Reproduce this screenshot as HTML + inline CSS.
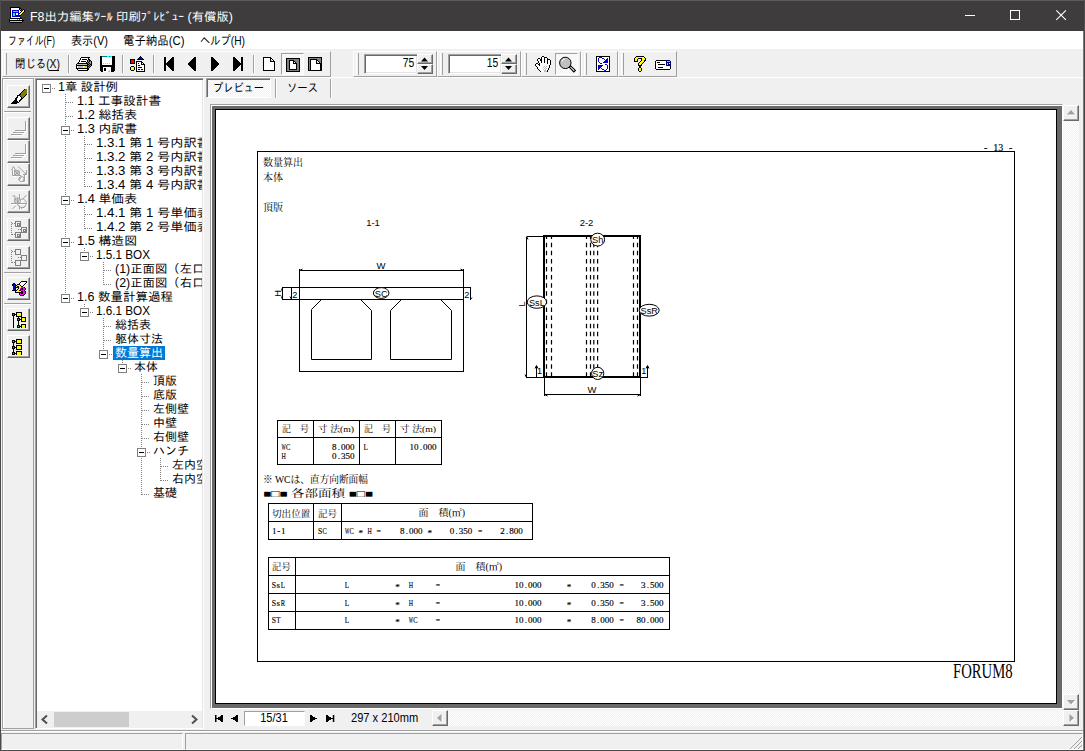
<!DOCTYPE html><html lang="ja"><head><meta charset="utf-8"><title>F8出力編集ツール 印刷プレビュー (有償版)</title><style>
*{box-sizing:border-box;margin:0;padding:0}
html,body{width:1085px;height:751px;overflow:hidden;background:#f0f0f0}
body{position:relative;font-family:"Liberation Sans",sans-serif;font-size:12px;color:#000}
.ab{position:absolute;display:block}
.jt{position:absolute;display:block;overflow:visible}
.jt text{font-family:"Liberation Sans","IPAGothic","Noto Sans CJK JP",sans-serif}
.jt text.dm{font-family:"Liberation Serif","Noto Serif CJK SC","Noto Sans CJK JP",serif}
#titlebar{left:0;top:0;width:1085px;height:31px;background:#3e3c3d}
#menubar{left:1px;top:31px;width:1083px;height:18px;background:#fff}
#toolbar{left:1px;top:49px;width:1083px;height:29px;background:#f0f0f0;border-bottom:1px solid #fff}
.band{position:absolute;top:51px;height:26px;border-top:1px solid #fff;border-left:1px solid #fff;border-right:1px solid #a0a0a0;border-bottom:1px solid #a0a0a0}
.grip{position:absolute;top:53px;width:3px;height:22px;border-left:1px solid #fff;border-right:1px solid #a0a0a0}
.sep{position:absolute;top:55px;width:2px;height:18px;border-left:1px solid #a0a0a0;border-right:1px solid #fff}
.edit{position:absolute;background:#fff;border:1px solid;border-color:#a0a0a0 #fff #fff #a0a0a0;box-shadow:inset 1px 1px 0 #696969, inset -1px -1px 0 #e3e3e3;text-align:right;font-size:12px;line-height:14px;padding:1px 3px 0 0;letter-spacing:0}
.spin{position:absolute;width:16px;height:10px;background:#f0f0f0;border:1px solid;border-color:#fff #696969 #696969 #fff;box-shadow:inset -1px -1px 0 #a0a0a0}
.tri{position:absolute;width:0;height:0}
.pressed{position:absolute;border:1px solid;border-color:#a0a0a0 #fff #fff #a0a0a0;background:#f8f8f8}
.sbtn{position:absolute;left:7px;width:23px;height:23px;background:#f0f0f0;border:1px solid;border-color:#fff #696969 #696969 #fff;box-shadow:inset -1px -1px 0 #a0a0a0}
.ssep{position:absolute;left:4px;width:27px;height:2px;border-top:1px solid #a0a0a0;border-bottom:1px solid #fff}
.dots-v{position:absolute;width:1px;background:repeating-linear-gradient(to bottom,#808080 0,#808080 1px,transparent 1px,transparent 2px)}
.dots-h{position:absolute;height:1px;background:repeating-linear-gradient(to right,#808080 0,#808080 1px,transparent 1px,transparent 2px)}
.exp{position:absolute;width:9px;height:9px;border:1px solid #808080;background:#fff}
.exp:after{content:"";position:absolute;left:1px;top:3px;width:5px;height:1px;background:#000}
.dither{background-color:#fff;background-image:linear-gradient(45deg,#f0f0f0 25%,transparent 25%,transparent 75%,#f0f0f0 75%),linear-gradient(45deg,#f0f0f0 25%,transparent 25%,transparent 75%,#f0f0f0 75%);background-size:2px 2px;background-position:0 0,1px 1px}
.scbtn{position:absolute;width:16px;height:16px;background:#f0f0f0;border:1px solid;border-color:#fff #696969 #696969 #fff;box-shadow:inset -1px -1px 0 #a0a0a0}
.doc{font-family:"Liberation Serif",serif;position:absolute;white-space:pre;color:#000}
</style></head><body><div id="titlebar" class="ab"><svg class="ab " style="left:9px;top:7px" width="16" height="16" viewBox="0 0 16 16" shape-rendering="crispEdges"><rect x="1" y="0" width="10" height="1" fill="#000"/><rect x="1" y="1" width="1" height="1" fill="#000"/><rect x="2" y="1" width="8" height="1" fill="#fff"/><rect x="10" y="1" width="2" height="1" fill="#000"/><rect x="1" y="2" width="1" height="1" fill="#000"/><rect x="2" y="2" width="8" height="1" fill="#fff"/><rect x="10" y="2" width="1" height="1" fill="#000"/><rect x="11" y="2" width="1" height="1" fill="#808080"/><rect x="12" y="2" width="1" height="1" fill="#000"/><rect x="14" y="2" width="1" height="1" fill="#000"/><rect x="1" y="3" width="1" height="1" fill="#000"/><rect x="2" y="3" width="1" height="1" fill="#fff"/><rect x="3" y="3" width="7" height="1" fill="#0000d0"/><rect x="10" y="3" width="1" height="1" fill="#fff"/><rect x="11" y="3" width="1" height="1" fill="#000"/><rect x="13" y="3" width="1" height="1" fill="#000"/><rect x="14" y="3" width="1" height="1" fill="#ffff00"/><rect x="15" y="3" width="1" height="1" fill="#000"/><rect x="1" y="4" width="1" height="1" fill="#000"/><rect x="2" y="4" width="1" height="1" fill="#fff"/><rect x="3" y="4" width="1" height="1" fill="#0000d0"/><rect x="4" y="4" width="5" height="1" fill="#00ffff"/><rect x="9" y="4" width="1" height="1" fill="#0000d0"/><rect x="10" y="4" width="2" height="1" fill="#fff"/><rect x="12" y="4" width="1" height="1" fill="#000"/><rect x="13" y="4" width="2" height="1" fill="#ffff00"/><rect x="15" y="4" width="1" height="1" fill="#000"/><rect x="1" y="5" width="1" height="1" fill="#000"/><rect x="2" y="5" width="1" height="1" fill="#fff"/><rect x="3" y="5" width="7" height="1" fill="#0000d0"/><rect x="10" y="5" width="1" height="1" fill="#fff"/><rect x="11" y="5" width="1" height="1" fill="#000"/><rect x="12" y="5" width="2" height="1" fill="#ffff00"/><rect x="14" y="5" width="1" height="1" fill="#000"/><rect x="1" y="6" width="1" height="1" fill="#000"/><rect x="2" y="6" width="1" height="1" fill="#fff"/><rect x="3" y="6" width="1" height="1" fill="#0000d0"/><rect x="4" y="6" width="2" height="1" fill="#00ffff"/><rect x="6" y="6" width="1" height="1" fill="#0000d0"/><rect x="7" y="6" width="2" height="1" fill="#fff"/><rect x="9" y="6" width="1" height="1" fill="#0000d0"/><rect x="10" y="6" width="1" height="1" fill="#000"/><rect x="11" y="6" width="2" height="1" fill="#ffff00"/><rect x="13" y="6" width="1" height="1" fill="#000"/><rect x="1" y="7" width="1" height="1" fill="#000"/><rect x="2" y="7" width="1" height="1" fill="#fff"/><rect x="3" y="7" width="1" height="1" fill="#0000d0"/><rect x="4" y="7" width="2" height="1" fill="#00ffff"/><rect x="6" y="7" width="1" height="1" fill="#0000d0"/><rect x="7" y="7" width="2" height="1" fill="#fff"/><rect x="9" y="7" width="1" height="1" fill="#0000d0"/><rect x="10" y="7" width="2" height="1" fill="#ffff00"/><rect x="12" y="7" width="1" height="1" fill="#000"/><rect x="1" y="8" width="1" height="1" fill="#000"/><rect x="2" y="8" width="1" height="1" fill="#fff"/><rect x="3" y="8" width="1" height="1" fill="#0000d0"/><rect x="4" y="8" width="2" height="1" fill="#00ffff"/><rect x="6" y="8" width="4" height="1" fill="#0000d0"/><rect x="10" y="8" width="2" height="1" fill="#000"/><rect x="1" y="9" width="1" height="1" fill="#000"/><rect x="2" y="9" width="1" height="1" fill="#fff"/><rect x="3" y="9" width="7" height="1" fill="#0000d0"/><rect x="10" y="9" width="1" height="1" fill="#000"/><rect x="1" y="10" width="1" height="1" fill="#000"/><rect x="2" y="10" width="9" height="1" fill="#fff"/><rect x="11" y="10" width="1" height="1" fill="#000"/><rect x="1" y="11" width="12" height="1" fill="#000"/><rect x="0" y="12" width="1" height="1" fill="#000"/><rect x="1" y="12" width="7" height="1" fill="#fff"/><rect x="8" y="12" width="1" height="1" fill="#00e000"/><rect x="9" y="12" width="1" height="1" fill="#fff"/><rect x="10" y="12" width="1" height="1" fill="#ff0000"/><rect x="11" y="12" width="2" height="1" fill="#fff"/><rect x="13" y="12" width="1" height="1" fill="#000"/><rect x="0" y="13" width="15" height="1" fill="#000"/><rect x="0" y="14" width="1" height="1" fill="#000"/><rect x="1" y="14" width="12" height="1" fill="#c0c0c0"/><rect x="13" y="14" width="1" height="1" fill="#000"/><rect x="1" y="15" width="12" height="1" fill="#000"/></svg><svg class="jt " role="img" aria-label="F8出力編集ツール 印刷プレビュー (有償版)" style="left:30px;top:8px;" width="210" height="16"><text x="0" y="12.6" font-size="12.1" fill="#fff" textLength="203" lengthAdjust="spacingAndGlyphs">F8出力編集ﾂｰﾙ 印刷ﾌﾟﾚﾋﾞｭｰ (有償版)</text></svg><svg class="ab" style="left:950px;top:0" width="135" height="31" fill="none" stroke="#fff" stroke-width="1"><path d="M15 15.500h10"/><rect x="60.500" y="10.500" width="9" height="9"/><path d="M106.300 10.300l9.600 9.600M115.900 10.300l-9.600 9.600" stroke-width="1.150"/></svg></div><div id="menubar" class="ab"></div><svg class="jt " role="img" aria-label="ファイル(F)" style="left:7.7px;top:33px;" width="49" height="16"><text x="0" y="12.3" font-size="12.4" fill="#000" textLength="47" lengthAdjust="spacingAndGlyphs">ファイル(F)</text></svg><svg class="jt " role="img" aria-label="表示(V)" style="left:70.8px;top:33px;" width="39" height="16"><text x="0" y="12.3" font-size="12.4" fill="#000" textLength="37" lengthAdjust="spacingAndGlyphs">表示(V)</text></svg><svg class="jt " role="img" aria-label="電子納品(C)" style="left:123.4px;top:33px;" width="63" height="16"><text x="0" y="12.3" font-size="12.4" fill="#000" textLength="61.500" lengthAdjust="spacingAndGlyphs">電子納品(C)</text></svg><svg class="jt " role="img" aria-label="ヘルプ(H)" style="left:200.4px;top:33px;" width="47" height="16"><text x="0" y="12.3" font-size="12.4" fill="#000" textLength="45" lengthAdjust="spacingAndGlyphs">ヘルプ(H)</text></svg><div id="toolbar" class="ab"></div><div class="band" style="left:2px;width:329px"></div><div class="band" style="left:353px;width:84px"></div><div class="band" style="left:437px;width:84px"></div><div class="band" style="left:521px;width:60px"></div><div class="band" style="left:581px;width:37px"></div><div class="band" style="left:618px;width:59px"></div><div class="grip" style="left:4px"></div><div class="grip" style="left:356px"></div><div class="grip" style="left:440px"></div><div class="grip" style="left:524px"></div><div class="grip" style="left:584px"></div><div class="grip" style="left:621px"></div><div class="sep" style="left:68px"></div><div class="sep" style="left:122px"></div><div class="sep" style="left:153px"></div><div class="sep" style="left:253px"></div><svg class="jt " role="img" aria-label="閉じる(X)" style="left:15.3px;top:57px;" width="47" height="16"><text x="0" y="11.3" font-size="12" fill="#000" textLength="45" lengthAdjust="spacingAndGlyphs">閉じる(X)</text></svg><div class="ab" style="left:49px;top:70px;width:10px;height:1px;background:#000"></div><svg class="ab " style="left:76px;top:57px" width="16" height="14" viewBox="0 0 16 14" shape-rendering="crispEdges"><rect x="5" y="0" width="9" height="1" fill="#000"/><rect x="4" y="1" width="1" height="1" fill="#000"/><rect x="5" y="1" width="7" height="1" fill="#fff"/><rect x="12" y="1" width="1" height="1" fill="#000"/><rect x="4" y="2" width="1" height="1" fill="#000"/><rect x="5" y="2" width="1" height="1" fill="#fff"/><rect x="6" y="2" width="5" height="1" fill="#000"/><rect x="11" y="2" width="1" height="1" fill="#fff"/><rect x="12" y="2" width="2" height="1" fill="#000"/><rect x="3" y="3" width="1" height="1" fill="#000"/><rect x="4" y="3" width="7" height="1" fill="#fff"/><rect x="11" y="3" width="1" height="1" fill="#000"/><rect x="12" y="3" width="1" height="1" fill="#808080"/><rect x="13" y="3" width="2" height="1" fill="#000"/><rect x="3" y="4" width="1" height="1" fill="#000"/><rect x="4" y="4" width="1" height="1" fill="#fff"/><rect x="5" y="4" width="5" height="1" fill="#000"/><rect x="10" y="4" width="1" height="1" fill="#fff"/><rect x="11" y="4" width="1" height="1" fill="#000"/><rect x="12" y="4" width="1" height="1" fill="#808080"/><rect x="13" y="4" width="1" height="1" fill="#000"/><rect x="14" y="4" width="1" height="1" fill="#808080"/><rect x="15" y="4" width="1" height="1" fill="#000"/><rect x="2" y="5" width="1" height="1" fill="#000"/><rect x="3" y="5" width="7" height="1" fill="#fff"/><rect x="10" y="5" width="1" height="1" fill="#000"/><rect x="11" y="5" width="1" height="1" fill="#808080"/><rect x="12" y="5" width="1" height="1" fill="#000"/><rect x="13" y="5" width="1" height="1" fill="#808080"/><rect x="14" y="5" width="1" height="1" fill="#c0c0c0"/><rect x="15" y="5" width="1" height="1" fill="#000"/><rect x="1" y="6" width="11" height="1" fill="#000"/><rect x="12" y="6" width="1" height="1" fill="#808080"/><rect x="13" y="6" width="1" height="1" fill="#000"/><rect x="14" y="6" width="1" height="1" fill="#808080"/><rect x="15" y="6" width="1" height="1" fill="#000"/><rect x="0" y="7" width="1" height="1" fill="#000"/><rect x="1" y="7" width="10" height="1" fill="#c0c0c0"/><rect x="11" y="7" width="2" height="1" fill="#000"/><rect x="13" y="7" width="1" height="1" fill="#808080"/><rect x="14" y="7" width="2" height="1" fill="#000"/><rect x="0" y="8" width="12" height="1" fill="#000"/><rect x="12" y="8" width="1" height="1" fill="#808080"/><rect x="13" y="8" width="1" height="1" fill="#000"/><rect x="14" y="8" width="1" height="1" fill="#808080"/><rect x="15" y="8" width="1" height="1" fill="#000"/><rect x="0" y="9" width="1" height="1" fill="#000"/><rect x="1" y="9" width="1" height="1" fill="#fff"/><rect x="2" y="9" width="5" height="1" fill="#c0c0c0"/><rect x="7" y="9" width="2" height="1" fill="#ffff00"/><rect x="9" y="9" width="2" height="1" fill="#c0c0c0"/><rect x="11" y="9" width="2" height="1" fill="#000"/><rect x="13" y="9" width="1" height="1" fill="#808080"/><rect x="14" y="9" width="1" height="1" fill="#000"/><rect x="0" y="10" width="1" height="1" fill="#000"/><rect x="1" y="10" width="1" height="1" fill="#fff"/><rect x="2" y="10" width="5" height="1" fill="#c0c0c0"/><rect x="7" y="10" width="2" height="1" fill="#ffff00"/><rect x="9" y="10" width="2" height="1" fill="#c0c0c0"/><rect x="11" y="10" width="1" height="1" fill="#000"/><rect x="12" y="10" width="1" height="1" fill="#808080"/><rect x="13" y="10" width="1" height="1" fill="#000"/><rect x="0" y="11" width="13" height="1" fill="#000"/><rect x="1" y="12" width="1" height="1" fill="#000"/><rect x="2" y="12" width="9" height="1" fill="#fff"/><rect x="11" y="12" width="2" height="1" fill="#000"/><rect x="2" y="13" width="10" height="1" fill="#000"/></svg><svg class="ab " style="left:100px;top:56px" width="15" height="16" viewBox="0 0 15 16" shape-rendering="crispEdges"><rect x="0" y="0" width="1" height="1" fill="#000"/><rect x="1" y="0" width="1" height="1" fill="#000080"/><rect x="2" y="0" width="5" height="1" fill="#008080"/><rect x="7" y="0" width="2" height="1" fill="#00ffff"/><rect x="9" y="0" width="1" height="1" fill="#008080"/><rect x="10" y="0" width="2" height="1" fill="#00ffff"/><rect x="12" y="0" width="3" height="1" fill="#000"/><rect x="0" y="1" width="2" height="1" fill="#000"/><rect x="2" y="1" width="10" height="1" fill="#fff"/><rect x="12" y="1" width="3" height="1" fill="#000"/><rect x="0" y="2" width="2" height="1" fill="#000"/><rect x="2" y="2" width="10" height="1" fill="#fff"/><rect x="12" y="2" width="3" height="1" fill="#000"/><rect x="0" y="3" width="2" height="1" fill="#000"/><rect x="2" y="3" width="10" height="1" fill="#fff"/><rect x="12" y="3" width="3" height="1" fill="#000"/><rect x="0" y="4" width="2" height="1" fill="#000"/><rect x="2" y="4" width="10" height="1" fill="#fff"/><rect x="12" y="4" width="3" height="1" fill="#000"/><rect x="0" y="5" width="2" height="1" fill="#000"/><rect x="2" y="5" width="10" height="1" fill="#fff"/><rect x="12" y="5" width="3" height="1" fill="#000"/><rect x="0" y="6" width="2" height="1" fill="#000"/><rect x="2" y="6" width="10" height="1" fill="#fff"/><rect x="12" y="6" width="3" height="1" fill="#000"/><rect x="0" y="7" width="2" height="1" fill="#000"/><rect x="2" y="7" width="1" height="1" fill="#fff"/><rect x="3" y="7" width="1" height="1" fill="#c0c0c0"/><rect x="4" y="7" width="1" height="1" fill="#fff"/><rect x="5" y="7" width="1" height="1" fill="#c0c0c0"/><rect x="6" y="7" width="1" height="1" fill="#fff"/><rect x="7" y="7" width="1" height="1" fill="#c0c0c0"/><rect x="8" y="7" width="1" height="1" fill="#fff"/><rect x="9" y="7" width="1" height="1" fill="#c0c0c0"/><rect x="10" y="7" width="2" height="1" fill="#fff"/><rect x="12" y="7" width="3" height="1" fill="#000"/><rect x="0" y="8" width="2" height="1" fill="#000"/><rect x="2" y="8" width="10" height="1" fill="#fff"/><rect x="12" y="8" width="3" height="1" fill="#000"/><rect x="0" y="9" width="15" height="1" fill="#000"/><rect x="0" y="10" width="15" height="1" fill="#000"/><rect x="0" y="11" width="3" height="1" fill="#000"/><rect x="3" y="11" width="8" height="1" fill="#fff"/><rect x="11" y="11" width="4" height="1" fill="#000"/><rect x="0" y="12" width="3" height="1" fill="#000"/><rect x="3" y="12" width="1" height="1" fill="#fff"/><rect x="4" y="12" width="2" height="1" fill="#000"/><rect x="6" y="12" width="5" height="1" fill="#fff"/><rect x="11" y="12" width="4" height="1" fill="#000"/><rect x="0" y="13" width="3" height="1" fill="#000"/><rect x="3" y="13" width="1" height="1" fill="#fff"/><rect x="4" y="13" width="2" height="1" fill="#000"/><rect x="6" y="13" width="5" height="1" fill="#fff"/><rect x="11" y="13" width="4" height="1" fill="#000"/><rect x="0" y="14" width="3" height="1" fill="#000"/><rect x="3" y="14" width="1" height="1" fill="#fff"/><rect x="4" y="14" width="2" height="1" fill="#000"/><rect x="6" y="14" width="3" height="1" fill="#fff"/><rect x="9" y="14" width="1" height="1" fill="#c0c0c0"/><rect x="10" y="14" width="1" height="1" fill="#fff"/><rect x="11" y="14" width="4" height="1" fill="#000"/><rect x="1" y="15" width="2" height="1" fill="#000"/><rect x="3" y="15" width="5" height="1" fill="#fff"/><rect x="8" y="15" width="2" height="1" fill="#c0c0c0"/><rect x="10" y="15" width="1" height="1" fill="#fff"/><rect x="11" y="15" width="3" height="1" fill="#000"/></svg><svg class="ab " style="left:130px;top:56px" width="15" height="16" viewBox="0 0 15 16" shape-rendering="crispEdges"><rect x="10" y="0" width="1" height="1" fill="#000"/><rect x="9" y="1" width="1" height="1" fill="#000"/><rect x="10" y="1" width="1" height="1" fill="#0000d0"/><rect x="11" y="1" width="1" height="1" fill="#000"/><rect x="8" y="2" width="1" height="1" fill="#000"/><rect x="9" y="2" width="3" height="1" fill="#0000d0"/><rect x="12" y="2" width="1" height="1" fill="#000"/><rect x="0" y="3" width="5" height="1" fill="#000"/><rect x="7" y="3" width="7" height="1" fill="#000"/><rect x="0" y="4" width="1" height="1" fill="#000"/><rect x="1" y="4" width="3" height="1" fill="#ff0000"/><rect x="4" y="4" width="1" height="1" fill="#000"/><rect x="0" y="5" width="1" height="1" fill="#000"/><rect x="1" y="5" width="3" height="1" fill="#ff0000"/><rect x="4" y="5" width="1" height="1" fill="#000"/><rect x="6" y="5" width="6" height="1" fill="#000"/><rect x="0" y="6" width="1" height="1" fill="#000"/><rect x="1" y="6" width="3" height="1" fill="#ff0000"/><rect x="4" y="6" width="1" height="1" fill="#000"/><rect x="6" y="6" width="1" height="1" fill="#000"/><rect x="7" y="6" width="4" height="1" fill="#fff"/><rect x="11" y="6" width="2" height="1" fill="#000"/><rect x="0" y="7" width="5" height="1" fill="#000"/><rect x="6" y="7" width="1" height="1" fill="#000"/><rect x="7" y="7" width="1" height="1" fill="#fff"/><rect x="8" y="7" width="1" height="1" fill="#000"/><rect x="9" y="7" width="2" height="1" fill="#fff"/><rect x="11" y="7" width="1" height="1" fill="#000"/><rect x="12" y="7" width="1" height="1" fill="#fff"/><rect x="13" y="7" width="1" height="1" fill="#000"/><rect x="6" y="8" width="1" height="1" fill="#000"/><rect x="7" y="8" width="4" height="1" fill="#fff"/><rect x="11" y="8" width="4" height="1" fill="#000"/><rect x="6" y="9" width="1" height="1" fill="#000"/><rect x="7" y="9" width="1" height="1" fill="#fff"/><rect x="8" y="9" width="2" height="1" fill="#000"/><rect x="10" y="9" width="4" height="1" fill="#fff"/><rect x="14" y="9" width="1" height="1" fill="#000"/><rect x="1" y="10" width="3" height="1" fill="#000"/><rect x="6" y="10" width="1" height="1" fill="#000"/><rect x="7" y="10" width="7" height="1" fill="#fff"/><rect x="14" y="10" width="1" height="1" fill="#000"/><rect x="0" y="11" width="1" height="1" fill="#000"/><rect x="1" y="11" width="3" height="1" fill="#ffff00"/><rect x="4" y="11" width="1" height="1" fill="#000"/><rect x="6" y="11" width="1" height="1" fill="#000"/><rect x="7" y="11" width="1" height="1" fill="#fff"/><rect x="8" y="11" width="4" height="1" fill="#000"/><rect x="12" y="11" width="2" height="1" fill="#fff"/><rect x="14" y="11" width="1" height="1" fill="#000"/><rect x="0" y="12" width="1" height="1" fill="#000"/><rect x="1" y="12" width="3" height="1" fill="#ffff00"/><rect x="4" y="12" width="1" height="1" fill="#000"/><rect x="6" y="12" width="1" height="1" fill="#000"/><rect x="7" y="12" width="7" height="1" fill="#fff"/><rect x="14" y="12" width="1" height="1" fill="#000"/><rect x="0" y="13" width="1" height="1" fill="#000"/><rect x="1" y="13" width="3" height="1" fill="#ffff00"/><rect x="4" y="13" width="1" height="1" fill="#000"/><rect x="6" y="13" width="1" height="1" fill="#000"/><rect x="7" y="13" width="1" height="1" fill="#fff"/><rect x="8" y="13" width="2" height="1" fill="#000"/><rect x="10" y="13" width="1" height="1" fill="#fff"/><rect x="11" y="13" width="2" height="1" fill="#000"/><rect x="13" y="13" width="1" height="1" fill="#fff"/><rect x="14" y="13" width="1" height="1" fill="#000"/><rect x="1" y="14" width="3" height="1" fill="#000"/><rect x="6" y="14" width="1" height="1" fill="#000"/><rect x="7" y="14" width="7" height="1" fill="#fff"/><rect x="14" y="14" width="1" height="1" fill="#000"/><rect x="6" y="15" width="9" height="1" fill="#000"/></svg><svg class="ab " style="left:164px;top:57px" width="10" height="14" viewBox="0 0 10 14" shape-rendering="crispEdges"><rect x="0" y="0" width="2" height="1" fill="#000"/><rect x="8" y="0" width="2" height="1" fill="#000"/><rect x="0" y="1" width="2" height="1" fill="#000"/><rect x="7" y="1" width="3" height="1" fill="#000"/><rect x="0" y="2" width="2" height="1" fill="#000"/><rect x="6" y="2" width="4" height="1" fill="#000"/><rect x="0" y="3" width="2" height="1" fill="#000"/><rect x="5" y="3" width="5" height="1" fill="#000"/><rect x="0" y="4" width="2" height="1" fill="#000"/><rect x="4" y="4" width="6" height="1" fill="#000"/><rect x="0" y="5" width="2" height="1" fill="#000"/><rect x="3" y="5" width="7" height="1" fill="#000"/><rect x="0" y="6" width="10" height="1" fill="#000"/><rect x="0" y="7" width="10" height="1" fill="#000"/><rect x="0" y="8" width="2" height="1" fill="#000"/><rect x="3" y="8" width="7" height="1" fill="#000"/><rect x="0" y="9" width="2" height="1" fill="#000"/><rect x="4" y="9" width="6" height="1" fill="#000"/><rect x="0" y="10" width="2" height="1" fill="#000"/><rect x="5" y="10" width="5" height="1" fill="#000"/><rect x="0" y="11" width="2" height="1" fill="#000"/><rect x="6" y="11" width="4" height="1" fill="#000"/><rect x="0" y="12" width="2" height="1" fill="#000"/><rect x="7" y="12" width="3" height="1" fill="#000"/><rect x="0" y="13" width="2" height="1" fill="#000"/><rect x="8" y="13" width="2" height="1" fill="#000"/></svg><svg class="ab " style="left:188px;top:57px" width="8" height="14" viewBox="0 0 8 14" shape-rendering="crispEdges"><rect x="6" y="0" width="2" height="1" fill="#000"/><rect x="5" y="1" width="3" height="1" fill="#000"/><rect x="4" y="2" width="4" height="1" fill="#000"/><rect x="3" y="3" width="5" height="1" fill="#000"/><rect x="2" y="4" width="6" height="1" fill="#000"/><rect x="1" y="5" width="7" height="1" fill="#000"/><rect x="0" y="6" width="8" height="1" fill="#000"/><rect x="0" y="7" width="8" height="1" fill="#000"/><rect x="1" y="8" width="7" height="1" fill="#000"/><rect x="2" y="9" width="6" height="1" fill="#000"/><rect x="3" y="10" width="5" height="1" fill="#000"/><rect x="4" y="11" width="4" height="1" fill="#000"/><rect x="5" y="12" width="3" height="1" fill="#000"/><rect x="6" y="13" width="2" height="1" fill="#000"/></svg><svg class="ab " style="left:211px;top:57px" width="8" height="14" viewBox="0 0 8 14" shape-rendering="crispEdges"><rect x="0" y="0" width="2" height="1" fill="#000"/><rect x="0" y="1" width="3" height="1" fill="#000"/><rect x="0" y="2" width="4" height="1" fill="#000"/><rect x="0" y="3" width="5" height="1" fill="#000"/><rect x="0" y="4" width="6" height="1" fill="#000"/><rect x="0" y="5" width="7" height="1" fill="#000"/><rect x="0" y="6" width="8" height="1" fill="#000"/><rect x="0" y="7" width="8" height="1" fill="#000"/><rect x="0" y="8" width="7" height="1" fill="#000"/><rect x="0" y="9" width="6" height="1" fill="#000"/><rect x="0" y="10" width="5" height="1" fill="#000"/><rect x="0" y="11" width="4" height="1" fill="#000"/><rect x="0" y="12" width="3" height="1" fill="#000"/><rect x="0" y="13" width="2" height="1" fill="#000"/></svg><svg class="ab " style="left:233px;top:57px" width="10" height="14" viewBox="0 0 10 14" shape-rendering="crispEdges"><rect x="0" y="0" width="2" height="1" fill="#000"/><rect x="8" y="0" width="2" height="1" fill="#000"/><rect x="0" y="1" width="3" height="1" fill="#000"/><rect x="8" y="1" width="2" height="1" fill="#000"/><rect x="0" y="2" width="4" height="1" fill="#000"/><rect x="8" y="2" width="2" height="1" fill="#000"/><rect x="0" y="3" width="5" height="1" fill="#000"/><rect x="8" y="3" width="2" height="1" fill="#000"/><rect x="0" y="4" width="6" height="1" fill="#000"/><rect x="8" y="4" width="2" height="1" fill="#000"/><rect x="0" y="5" width="7" height="1" fill="#000"/><rect x="8" y="5" width="2" height="1" fill="#000"/><rect x="0" y="6" width="10" height="1" fill="#000"/><rect x="0" y="7" width="10" height="1" fill="#000"/><rect x="0" y="8" width="7" height="1" fill="#000"/><rect x="8" y="8" width="2" height="1" fill="#000"/><rect x="0" y="9" width="6" height="1" fill="#000"/><rect x="8" y="9" width="2" height="1" fill="#000"/><rect x="0" y="10" width="5" height="1" fill="#000"/><rect x="8" y="10" width="2" height="1" fill="#000"/><rect x="0" y="11" width="4" height="1" fill="#000"/><rect x="8" y="11" width="2" height="1" fill="#000"/><rect x="0" y="12" width="3" height="1" fill="#000"/><rect x="8" y="12" width="2" height="1" fill="#000"/><rect x="0" y="13" width="2" height="1" fill="#000"/><rect x="8" y="13" width="2" height="1" fill="#000"/></svg><svg class="ab " style="left:263px;top:57px" width="12" height="14" viewBox="0 0 12 14" shape-rendering="crispEdges"><rect x="0" y="0" width="8" height="1" fill="#000"/><rect x="0" y="1" width="1" height="1" fill="#000"/><rect x="1" y="1" width="6" height="1" fill="#fff"/><rect x="7" y="1" width="2" height="1" fill="#000"/><rect x="0" y="2" width="1" height="1" fill="#000"/><rect x="1" y="2" width="6" height="1" fill="#fff"/><rect x="7" y="2" width="1" height="1" fill="#000"/><rect x="8" y="2" width="1" height="1" fill="#fff"/><rect x="9" y="2" width="1" height="1" fill="#000"/><rect x="0" y="3" width="1" height="1" fill="#000"/><rect x="1" y="3" width="6" height="1" fill="#fff"/><rect x="7" y="3" width="1" height="1" fill="#000"/><rect x="8" y="3" width="1" height="1" fill="#c0c0c0"/><rect x="9" y="3" width="1" height="1" fill="#fff"/><rect x="10" y="3" width="1" height="1" fill="#000"/><rect x="0" y="4" width="1" height="1" fill="#000"/><rect x="1" y="4" width="6" height="1" fill="#fff"/><rect x="7" y="4" width="5" height="1" fill="#000"/><rect x="0" y="5" width="1" height="1" fill="#000"/><rect x="1" y="5" width="10" height="1" fill="#fff"/><rect x="11" y="5" width="1" height="1" fill="#000"/><rect x="0" y="6" width="1" height="1" fill="#000"/><rect x="1" y="6" width="10" height="1" fill="#fff"/><rect x="11" y="6" width="1" height="1" fill="#000"/><rect x="0" y="7" width="1" height="1" fill="#000"/><rect x="1" y="7" width="10" height="1" fill="#fff"/><rect x="11" y="7" width="1" height="1" fill="#000"/><rect x="0" y="8" width="1" height="1" fill="#000"/><rect x="1" y="8" width="10" height="1" fill="#fff"/><rect x="11" y="8" width="1" height="1" fill="#000"/><rect x="0" y="9" width="1" height="1" fill="#000"/><rect x="1" y="9" width="10" height="1" fill="#fff"/><rect x="11" y="9" width="1" height="1" fill="#000"/><rect x="0" y="10" width="1" height="1" fill="#000"/><rect x="1" y="10" width="10" height="1" fill="#fff"/><rect x="11" y="10" width="1" height="1" fill="#000"/><rect x="0" y="11" width="1" height="1" fill="#000"/><rect x="1" y="11" width="10" height="1" fill="#fff"/><rect x="11" y="11" width="1" height="1" fill="#000"/><rect x="0" y="12" width="1" height="1" fill="#000"/><rect x="1" y="12" width="10" height="1" fill="#fff"/><rect x="11" y="12" width="1" height="1" fill="#000"/><rect x="0" y="13" width="12" height="1" fill="#000"/></svg><div class="pressed dither" style="left:281px;top:53px;width:23px;height:22px"></div><svg class="ab " style="left:286px;top:58px" width="14" height="14" viewBox="0 0 14 14" shape-rendering="crispEdges"><rect x="0" y="0" width="14" height="1" fill="#000"/><rect x="0" y="1" width="1" height="1" fill="#000"/><rect x="1" y="1" width="12" height="1" fill="#808080"/><rect x="13" y="1" width="1" height="1" fill="#000"/><rect x="0" y="2" width="1" height="1" fill="#000"/><rect x="1" y="2" width="2" height="1" fill="#808080"/><rect x="3" y="2" width="5" height="1" fill="#000"/><rect x="8" y="2" width="5" height="1" fill="#808080"/><rect x="13" y="2" width="1" height="1" fill="#000"/><rect x="0" y="3" width="1" height="1" fill="#000"/><rect x="1" y="3" width="2" height="1" fill="#808080"/><rect x="3" y="3" width="1" height="1" fill="#000"/><rect x="4" y="3" width="3" height="1" fill="#fff"/><rect x="7" y="3" width="2" height="1" fill="#000"/><rect x="9" y="3" width="4" height="1" fill="#808080"/><rect x="13" y="3" width="1" height="1" fill="#000"/><rect x="0" y="4" width="1" height="1" fill="#000"/><rect x="1" y="4" width="2" height="1" fill="#808080"/><rect x="3" y="4" width="1" height="1" fill="#000"/><rect x="4" y="4" width="3" height="1" fill="#fff"/><rect x="7" y="4" width="1" height="1" fill="#000"/><rect x="8" y="4" width="1" height="1" fill="#fff"/><rect x="9" y="4" width="1" height="1" fill="#000"/><rect x="10" y="4" width="3" height="1" fill="#808080"/><rect x="13" y="4" width="1" height="1" fill="#000"/><rect x="0" y="5" width="1" height="1" fill="#000"/><rect x="1" y="5" width="2" height="1" fill="#808080"/><rect x="3" y="5" width="1" height="1" fill="#000"/><rect x="4" y="5" width="3" height="1" fill="#fff"/><rect x="7" y="5" width="4" height="1" fill="#000"/><rect x="11" y="5" width="2" height="1" fill="#808080"/><rect x="13" y="5" width="1" height="1" fill="#000"/><rect x="0" y="6" width="1" height="1" fill="#000"/><rect x="1" y="6" width="2" height="1" fill="#808080"/><rect x="3" y="6" width="1" height="1" fill="#000"/><rect x="4" y="6" width="6" height="1" fill="#fff"/><rect x="10" y="6" width="1" height="1" fill="#000"/><rect x="11" y="6" width="2" height="1" fill="#808080"/><rect x="13" y="6" width="1" height="1" fill="#000"/><rect x="0" y="7" width="1" height="1" fill="#000"/><rect x="1" y="7" width="2" height="1" fill="#808080"/><rect x="3" y="7" width="1" height="1" fill="#000"/><rect x="4" y="7" width="6" height="1" fill="#fff"/><rect x="10" y="7" width="1" height="1" fill="#000"/><rect x="11" y="7" width="2" height="1" fill="#808080"/><rect x="13" y="7" width="1" height="1" fill="#000"/><rect x="0" y="8" width="1" height="1" fill="#000"/><rect x="1" y="8" width="2" height="1" fill="#808080"/><rect x="3" y="8" width="1" height="1" fill="#000"/><rect x="4" y="8" width="6" height="1" fill="#fff"/><rect x="10" y="8" width="1" height="1" fill="#000"/><rect x="11" y="8" width="2" height="1" fill="#808080"/><rect x="13" y="8" width="1" height="1" fill="#000"/><rect x="0" y="9" width="1" height="1" fill="#000"/><rect x="1" y="9" width="2" height="1" fill="#808080"/><rect x="3" y="9" width="1" height="1" fill="#000"/><rect x="4" y="9" width="6" height="1" fill="#fff"/><rect x="10" y="9" width="1" height="1" fill="#000"/><rect x="11" y="9" width="2" height="1" fill="#808080"/><rect x="13" y="9" width="1" height="1" fill="#000"/><rect x="0" y="10" width="1" height="1" fill="#000"/><rect x="1" y="10" width="2" height="1" fill="#808080"/><rect x="3" y="10" width="1" height="1" fill="#000"/><rect x="4" y="10" width="6" height="1" fill="#fff"/><rect x="10" y="10" width="1" height="1" fill="#000"/><rect x="11" y="10" width="2" height="1" fill="#808080"/><rect x="13" y="10" width="1" height="1" fill="#000"/><rect x="0" y="11" width="1" height="1" fill="#000"/><rect x="1" y="11" width="2" height="1" fill="#808080"/><rect x="3" y="11" width="8" height="1" fill="#000"/><rect x="11" y="11" width="2" height="1" fill="#808080"/><rect x="13" y="11" width="1" height="1" fill="#000"/><rect x="0" y="12" width="1" height="1" fill="#000"/><rect x="1" y="12" width="12" height="1" fill="#808080"/><rect x="13" y="12" width="1" height="1" fill="#000"/><rect x="0" y="13" width="14" height="1" fill="#000"/></svg><svg class="ab " style="left:308px;top:57px" width="14" height="14" viewBox="0 0 14 14" shape-rendering="crispEdges"><rect x="0" y="0" width="14" height="1" fill="#000"/><rect x="0" y="1" width="1" height="1" fill="#000"/><rect x="1" y="1" width="12" height="1" fill="#808080"/><rect x="13" y="1" width="1" height="1" fill="#000"/><rect x="0" y="2" width="1" height="1" fill="#000"/><rect x="1" y="2" width="1" height="1" fill="#808080"/><rect x="2" y="2" width="7" height="1" fill="#000"/><rect x="9" y="2" width="4" height="1" fill="#808080"/><rect x="13" y="2" width="1" height="1" fill="#000"/><rect x="0" y="3" width="1" height="1" fill="#000"/><rect x="1" y="3" width="1" height="1" fill="#808080"/><rect x="2" y="3" width="1" height="1" fill="#000"/><rect x="3" y="3" width="5" height="1" fill="#fff"/><rect x="8" y="3" width="2" height="1" fill="#000"/><rect x="10" y="3" width="3" height="1" fill="#808080"/><rect x="13" y="3" width="1" height="1" fill="#000"/><rect x="0" y="4" width="1" height="1" fill="#000"/><rect x="1" y="4" width="1" height="1" fill="#808080"/><rect x="2" y="4" width="1" height="1" fill="#000"/><rect x="3" y="4" width="5" height="1" fill="#fff"/><rect x="8" y="4" width="1" height="1" fill="#000"/><rect x="9" y="4" width="1" height="1" fill="#fff"/><rect x="10" y="4" width="1" height="1" fill="#000"/><rect x="11" y="4" width="2" height="1" fill="#808080"/><rect x="13" y="4" width="1" height="1" fill="#000"/><rect x="0" y="5" width="1" height="1" fill="#000"/><rect x="1" y="5" width="1" height="1" fill="#808080"/><rect x="2" y="5" width="1" height="1" fill="#000"/><rect x="3" y="5" width="5" height="1" fill="#fff"/><rect x="8" y="5" width="1" height="1" fill="#000"/><rect x="9" y="5" width="1" height="1" fill="#c0c0c0"/><rect x="10" y="5" width="1" height="1" fill="#fff"/><rect x="11" y="5" width="1" height="1" fill="#000"/><rect x="12" y="5" width="1" height="1" fill="#808080"/><rect x="13" y="5" width="1" height="1" fill="#000"/><rect x="0" y="6" width="1" height="1" fill="#000"/><rect x="1" y="6" width="1" height="1" fill="#808080"/><rect x="2" y="6" width="1" height="1" fill="#000"/><rect x="3" y="6" width="5" height="1" fill="#fff"/><rect x="8" y="6" width="6" height="1" fill="#000"/><rect x="0" y="7" width="1" height="1" fill="#000"/><rect x="1" y="7" width="1" height="1" fill="#808080"/><rect x="2" y="7" width="1" height="1" fill="#000"/><rect x="3" y="7" width="9" height="1" fill="#fff"/><rect x="12" y="7" width="2" height="1" fill="#000"/><rect x="0" y="8" width="1" height="1" fill="#000"/><rect x="1" y="8" width="1" height="1" fill="#808080"/><rect x="2" y="8" width="1" height="1" fill="#000"/><rect x="3" y="8" width="9" height="1" fill="#fff"/><rect x="12" y="8" width="2" height="1" fill="#000"/><rect x="0" y="9" width="1" height="1" fill="#000"/><rect x="1" y="9" width="1" height="1" fill="#808080"/><rect x="2" y="9" width="1" height="1" fill="#000"/><rect x="3" y="9" width="9" height="1" fill="#fff"/><rect x="12" y="9" width="2" height="1" fill="#000"/><rect x="0" y="10" width="1" height="1" fill="#000"/><rect x="1" y="10" width="1" height="1" fill="#808080"/><rect x="2" y="10" width="1" height="1" fill="#000"/><rect x="3" y="10" width="9" height="1" fill="#fff"/><rect x="12" y="10" width="2" height="1" fill="#000"/><rect x="0" y="11" width="1" height="1" fill="#000"/><rect x="1" y="11" width="1" height="1" fill="#808080"/><rect x="2" y="11" width="1" height="1" fill="#000"/><rect x="3" y="11" width="9" height="1" fill="#fff"/><rect x="12" y="11" width="2" height="1" fill="#000"/><rect x="0" y="12" width="1" height="1" fill="#000"/><rect x="1" y="12" width="1" height="1" fill="#808080"/><rect x="2" y="12" width="1" height="1" fill="#000"/><rect x="3" y="12" width="9" height="1" fill="#fff"/><rect x="12" y="12" width="2" height="1" fill="#000"/><rect x="0" y="13" width="14" height="1" fill="#000"/></svg><div class="edit" style="left:364px;top:54px;width:54px;height:20px"><span style="display:inline-block;transform:scaleX(.86);transform-origin:100% 50%">75</span></div><div class="spin" style="left:417px;top:54px"></div><div class="spin" style="left:417px;top:64px"></div><svg class="ab" style="left:417px;top:55px" width="16" height="18" fill="#000"><path d="M7.5 2.5l3.5 4h-7z"/><path d="M7.5 15l3.5-4h-7z"/></svg><div class="edit" style="left:448px;top:54px;width:54px;height:20px"><span style="display:inline-block;transform:scaleX(.86);transform-origin:100% 50%">15</span></div><div class="spin" style="left:501px;top:54px"></div><div class="spin" style="left:501px;top:64px"></div><svg class="ab" style="left:501px;top:55px" width="16" height="18" fill="#000"><path d="M7.5 2.5l3.5 4h-7z"/><path d="M7.5 15l3.5-4h-7z"/></svg><svg class="ab " style="left:535px;top:56px" width="16" height="16" viewBox="0 0 16 16" shape-rendering="crispEdges"><rect x="7" y="0" width="2" height="1" fill="#000"/><rect x="6" y="1" width="1" height="1" fill="#000"/><rect x="7" y="1" width="2" height="1" fill="#fff"/><rect x="9" y="1" width="3" height="1" fill="#000"/><rect x="3" y="2" width="2" height="1" fill="#000"/><rect x="6" y="2" width="1" height="1" fill="#000"/><rect x="7" y="2" width="2" height="1" fill="#fff"/><rect x="9" y="2" width="1" height="1" fill="#000"/><rect x="10" y="2" width="2" height="1" fill="#fff"/><rect x="12" y="2" width="1" height="1" fill="#000"/><rect x="2" y="3" width="1" height="1" fill="#000"/><rect x="3" y="3" width="2" height="1" fill="#fff"/><rect x="5" y="3" width="2" height="1" fill="#000"/><rect x="7" y="3" width="2" height="1" fill="#fff"/><rect x="9" y="3" width="1" height="1" fill="#000"/><rect x="10" y="3" width="2" height="1" fill="#fff"/><rect x="12" y="3" width="3" height="1" fill="#000"/><rect x="2" y="4" width="1" height="1" fill="#000"/><rect x="3" y="4" width="2" height="1" fill="#fff"/><rect x="5" y="4" width="2" height="1" fill="#000"/><rect x="7" y="4" width="2" height="1" fill="#fff"/><rect x="9" y="4" width="1" height="1" fill="#000"/><rect x="10" y="4" width="2" height="1" fill="#fff"/><rect x="12" y="4" width="1" height="1" fill="#000"/><rect x="13" y="4" width="2" height="1" fill="#fff"/><rect x="15" y="4" width="1" height="1" fill="#000"/><rect x="3" y="5" width="1" height="1" fill="#000"/><rect x="4" y="5" width="2" height="1" fill="#fff"/><rect x="6" y="5" width="1" height="1" fill="#000"/><rect x="7" y="5" width="2" height="1" fill="#fff"/><rect x="9" y="5" width="1" height="1" fill="#000"/><rect x="10" y="5" width="2" height="1" fill="#fff"/><rect x="12" y="5" width="1" height="1" fill="#000"/><rect x="13" y="5" width="2" height="1" fill="#fff"/><rect x="15" y="5" width="1" height="1" fill="#000"/><rect x="3" y="6" width="1" height="1" fill="#000"/><rect x="4" y="6" width="2" height="1" fill="#fff"/><rect x="6" y="6" width="1" height="1" fill="#000"/><rect x="7" y="6" width="2" height="1" fill="#fff"/><rect x="9" y="6" width="1" height="1" fill="#000"/><rect x="10" y="6" width="2" height="1" fill="#fff"/><rect x="12" y="6" width="1" height="1" fill="#000"/><rect x="13" y="6" width="2" height="1" fill="#fff"/><rect x="15" y="6" width="1" height="1" fill="#000"/><rect x="1" y="7" width="2" height="1" fill="#000"/><rect x="3" y="7" width="1" height="1" fill="#fff"/><rect x="4" y="7" width="1" height="1" fill="#000"/><rect x="5" y="7" width="7" height="1" fill="#fff"/><rect x="12" y="7" width="1" height="1" fill="#000"/><rect x="13" y="7" width="2" height="1" fill="#fff"/><rect x="15" y="7" width="1" height="1" fill="#000"/><rect x="0" y="8" width="1" height="1" fill="#000"/><rect x="1" y="8" width="2" height="1" fill="#fff"/><rect x="3" y="8" width="2" height="1" fill="#000"/><rect x="5" y="8" width="10" height="1" fill="#fff"/><rect x="15" y="8" width="1" height="1" fill="#000"/><rect x="0" y="9" width="1" height="1" fill="#000"/><rect x="1" y="9" width="3" height="1" fill="#fff"/><rect x="4" y="9" width="1" height="1" fill="#000"/><rect x="5" y="9" width="9" height="1" fill="#fff"/><rect x="14" y="9" width="1" height="1" fill="#000"/><rect x="1" y="10" width="1" height="1" fill="#000"/><rect x="2" y="10" width="7" height="1" fill="#fff"/><rect x="9" y="10" width="1" height="1" fill="#c0c0c0"/><rect x="10" y="10" width="1" height="1" fill="#fff"/><rect x="11" y="10" width="1" height="1" fill="#c0c0c0"/><rect x="12" y="10" width="2" height="1" fill="#fff"/><rect x="14" y="10" width="1" height="1" fill="#000"/><rect x="2" y="11" width="1" height="1" fill="#000"/><rect x="3" y="11" width="5" height="1" fill="#fff"/><rect x="8" y="11" width="1" height="1" fill="#c0c0c0"/><rect x="9" y="11" width="1" height="1" fill="#fff"/><rect x="10" y="11" width="1" height="1" fill="#c0c0c0"/><rect x="11" y="11" width="3" height="1" fill="#fff"/><rect x="14" y="11" width="1" height="1" fill="#000"/><rect x="2" y="12" width="1" height="1" fill="#000"/><rect x="3" y="12" width="6" height="1" fill="#fff"/><rect x="9" y="12" width="1" height="1" fill="#c0c0c0"/><rect x="10" y="12" width="1" height="1" fill="#fff"/><rect x="11" y="12" width="1" height="1" fill="#c0c0c0"/><rect x="12" y="12" width="1" height="1" fill="#fff"/><rect x="13" y="12" width="1" height="1" fill="#000"/><rect x="3" y="13" width="1" height="1" fill="#000"/><rect x="4" y="13" width="4" height="1" fill="#fff"/><rect x="8" y="13" width="1" height="1" fill="#c0c0c0"/><rect x="9" y="13" width="1" height="1" fill="#fff"/><rect x="10" y="13" width="1" height="1" fill="#c0c0c0"/><rect x="11" y="13" width="2" height="1" fill="#fff"/><rect x="13" y="13" width="1" height="1" fill="#000"/><rect x="4" y="14" width="1" height="1" fill="#000"/><rect x="5" y="14" width="4" height="1" fill="#fff"/><rect x="9" y="14" width="2" height="1" fill="#c0c0c0"/><rect x="11" y="14" width="1" height="1" fill="#fff"/><rect x="12" y="14" width="1" height="1" fill="#000"/><rect x="5" y="15" width="1" height="1" fill="#000"/><rect x="6" y="15" width="3" height="1" fill="#fff"/><rect x="9" y="15" width="3" height="1" fill="#c0c0c0"/><rect x="12" y="15" width="1" height="1" fill="#000"/></svg><div class="pressed dither" style="left:555px;top:53px;width:23px;height:22px"></div><svg class="ab" style="left:556px;top:54px" width="22" height="20"><path d="M13.2 13.2l4.6 4.8 1.6-1.6-4.8-4.6z" fill="#fff" stroke="#000" stroke-width="1.1"/><circle cx="9.300" cy="8.900" r="5.700" fill="#c0c0c0" stroke="#000" stroke-width="1"/><path d="M6 7.5a3.6 3.6 0 0 1 3-2.6" fill="none" stroke="#fff" stroke-width="1"/></svg><svg class="ab " style="left:596px;top:56px" width="14" height="16" viewBox="0 0 14 16" shape-rendering="crispEdges"><rect x="0" y="0" width="14" height="1" fill="#000"/><rect x="0" y="1" width="1" height="1" fill="#000"/><rect x="1" y="1" width="2" height="1" fill="#fff"/><rect x="3" y="1" width="3" height="1" fill="#0000d0"/><rect x="6" y="1" width="7" height="1" fill="#fff"/><rect x="13" y="1" width="1" height="1" fill="#000"/><rect x="0" y="2" width="1" height="1" fill="#000"/><rect x="1" y="2" width="1" height="1" fill="#fff"/><rect x="2" y="2" width="1" height="1" fill="#0000d0"/><rect x="3" y="2" width="3" height="1" fill="#fff"/><rect x="6" y="2" width="2" height="1" fill="#0000d0"/><rect x="8" y="2" width="3" height="1" fill="#fff"/><rect x="11" y="2" width="1" height="1" fill="#0000d0"/><rect x="12" y="2" width="1" height="1" fill="#fff"/><rect x="13" y="2" width="1" height="1" fill="#000"/><rect x="0" y="3" width="1" height="1" fill="#000"/><rect x="1" y="3" width="1" height="1" fill="#fff"/><rect x="2" y="3" width="1" height="1" fill="#0000d0"/><rect x="3" y="3" width="5" height="1" fill="#fff"/><rect x="8" y="3" width="1" height="1" fill="#0000d0"/><rect x="9" y="3" width="1" height="1" fill="#fff"/><rect x="10" y="3" width="2" height="1" fill="#0000d0"/><rect x="12" y="3" width="1" height="1" fill="#fff"/><rect x="13" y="3" width="1" height="1" fill="#000"/><rect x="0" y="4" width="1" height="1" fill="#000"/><rect x="1" y="4" width="1" height="1" fill="#fff"/><rect x="2" y="4" width="1" height="1" fill="#0000d0"/><rect x="3" y="4" width="6" height="1" fill="#fff"/><rect x="9" y="4" width="3" height="1" fill="#0000d0"/><rect x="12" y="4" width="1" height="1" fill="#fff"/><rect x="13" y="4" width="1" height="1" fill="#000"/><rect x="0" y="5" width="1" height="1" fill="#000"/><rect x="1" y="5" width="1" height="1" fill="#fff"/><rect x="2" y="5" width="1" height="1" fill="#0000d0"/><rect x="3" y="5" width="5" height="1" fill="#fff"/><rect x="8" y="5" width="4" height="1" fill="#0000d0"/><rect x="12" y="5" width="1" height="1" fill="#fff"/><rect x="13" y="5" width="1" height="1" fill="#000"/><rect x="0" y="6" width="1" height="1" fill="#000"/><rect x="1" y="6" width="2" height="1" fill="#fff"/><rect x="3" y="6" width="1" height="1" fill="#0000d0"/><rect x="4" y="6" width="3" height="1" fill="#fff"/><rect x="7" y="6" width="5" height="1" fill="#0000d0"/><rect x="12" y="6" width="1" height="1" fill="#fff"/><rect x="13" y="6" width="1" height="1" fill="#000"/><rect x="0" y="7" width="1" height="1" fill="#000"/><rect x="1" y="7" width="3" height="1" fill="#fff"/><rect x="4" y="7" width="2" height="1" fill="#0000d0"/><rect x="6" y="7" width="7" height="1" fill="#fff"/><rect x="13" y="7" width="1" height="1" fill="#000"/><rect x="0" y="8" width="1" height="1" fill="#000"/><rect x="1" y="8" width="8" height="1" fill="#fff"/><rect x="9" y="8" width="2" height="1" fill="#0000d0"/><rect x="11" y="8" width="2" height="1" fill="#fff"/><rect x="13" y="8" width="1" height="1" fill="#000"/><rect x="0" y="9" width="1" height="1" fill="#000"/><rect x="1" y="9" width="1" height="1" fill="#fff"/><rect x="2" y="9" width="5" height="1" fill="#0000d0"/><rect x="7" y="9" width="4" height="1" fill="#fff"/><rect x="11" y="9" width="1" height="1" fill="#0000d0"/><rect x="12" y="9" width="1" height="1" fill="#fff"/><rect x="13" y="9" width="1" height="1" fill="#000"/><rect x="0" y="10" width="1" height="1" fill="#000"/><rect x="1" y="10" width="1" height="1" fill="#fff"/><rect x="2" y="10" width="4" height="1" fill="#0000d0"/><rect x="6" y="10" width="5" height="1" fill="#fff"/><rect x="11" y="10" width="1" height="1" fill="#0000d0"/><rect x="12" y="10" width="1" height="1" fill="#fff"/><rect x="13" y="10" width="1" height="1" fill="#000"/><rect x="0" y="11" width="1" height="1" fill="#000"/><rect x="1" y="11" width="1" height="1" fill="#fff"/><rect x="2" y="11" width="3" height="1" fill="#0000d0"/><rect x="5" y="11" width="6" height="1" fill="#fff"/><rect x="11" y="11" width="1" height="1" fill="#0000d0"/><rect x="12" y="11" width="1" height="1" fill="#fff"/><rect x="13" y="11" width="1" height="1" fill="#000"/><rect x="0" y="12" width="1" height="1" fill="#000"/><rect x="1" y="12" width="1" height="1" fill="#fff"/><rect x="2" y="12" width="2" height="1" fill="#0000d0"/><rect x="4" y="12" width="1" height="1" fill="#fff"/><rect x="5" y="12" width="1" height="1" fill="#0000d0"/><rect x="6" y="12" width="5" height="1" fill="#fff"/><rect x="11" y="12" width="1" height="1" fill="#0000d0"/><rect x="12" y="12" width="1" height="1" fill="#fff"/><rect x="13" y="12" width="1" height="1" fill="#000"/><rect x="0" y="13" width="1" height="1" fill="#000"/><rect x="1" y="13" width="1" height="1" fill="#fff"/><rect x="2" y="13" width="1" height="1" fill="#0000d0"/><rect x="3" y="13" width="3" height="1" fill="#fff"/><rect x="6" y="13" width="2" height="1" fill="#0000d0"/><rect x="8" y="13" width="2" height="1" fill="#fff"/><rect x="10" y="13" width="1" height="1" fill="#0000d0"/><rect x="11" y="13" width="2" height="1" fill="#fff"/><rect x="13" y="13" width="1" height="1" fill="#000"/><rect x="0" y="14" width="1" height="1" fill="#000"/><rect x="1" y="14" width="7" height="1" fill="#fff"/><rect x="8" y="14" width="2" height="1" fill="#0000d0"/><rect x="10" y="14" width="3" height="1" fill="#fff"/><rect x="13" y="14" width="1" height="1" fill="#000"/><rect x="0" y="15" width="14" height="1" fill="#000"/></svg><svg class="ab " style="left:634px;top:56px" width="12" height="16" viewBox="0 0 12 16" shape-rendering="crispEdges"><rect x="2" y="0" width="8" height="1" fill="#000"/><rect x="1" y="1" width="1" height="1" fill="#000"/><rect x="2" y="1" width="8" height="1" fill="#ffff00"/><rect x="10" y="1" width="1" height="1" fill="#000"/><rect x="0" y="2" width="1" height="1" fill="#000"/><rect x="1" y="2" width="3" height="1" fill="#ffff00"/><rect x="4" y="2" width="4" height="1" fill="#000"/><rect x="8" y="2" width="3" height="1" fill="#ffff00"/><rect x="11" y="2" width="1" height="1" fill="#000"/><rect x="0" y="3" width="1" height="1" fill="#000"/><rect x="1" y="3" width="2" height="1" fill="#ffff00"/><rect x="3" y="3" width="1" height="1" fill="#000"/><rect x="7" y="3" width="1" height="1" fill="#000"/><rect x="8" y="3" width="3" height="1" fill="#ffff00"/><rect x="11" y="3" width="1" height="1" fill="#000"/><rect x="0" y="4" width="1" height="1" fill="#000"/><rect x="1" y="4" width="2" height="1" fill="#ffff00"/><rect x="3" y="4" width="1" height="1" fill="#000"/><rect x="7" y="4" width="1" height="1" fill="#000"/><rect x="8" y="4" width="2" height="1" fill="#ffff00"/><rect x="10" y="4" width="2" height="1" fill="#000"/><rect x="0" y="5" width="4" height="1" fill="#000"/><rect x="6" y="5" width="1" height="1" fill="#000"/><rect x="7" y="5" width="3" height="1" fill="#ffff00"/><rect x="10" y="5" width="1" height="1" fill="#000"/><rect x="5" y="6" width="1" height="1" fill="#000"/><rect x="6" y="6" width="3" height="1" fill="#ffff00"/><rect x="9" y="6" width="1" height="1" fill="#000"/><rect x="4" y="7" width="1" height="1" fill="#000"/><rect x="5" y="7" width="3" height="1" fill="#ffff00"/><rect x="8" y="7" width="1" height="1" fill="#000"/><rect x="4" y="8" width="1" height="1" fill="#000"/><rect x="5" y="8" width="2" height="1" fill="#ffff00"/><rect x="7" y="8" width="1" height="1" fill="#000"/><rect x="4" y="9" width="4" height="1" fill="#000"/><rect x="5" y="10" width="2" height="1" fill="#000"/><rect x="5" y="11" width="2" height="1" fill="#000"/><rect x="4" y="12" width="1" height="1" fill="#000"/><rect x="5" y="12" width="2" height="1" fill="#ffff00"/><rect x="7" y="12" width="1" height="1" fill="#000"/><rect x="4" y="13" width="1" height="1" fill="#000"/><rect x="5" y="13" width="2" height="1" fill="#ffff00"/><rect x="7" y="13" width="1" height="1" fill="#000"/><rect x="4" y="14" width="1" height="1" fill="#000"/><rect x="5" y="14" width="2" height="1" fill="#ffff00"/><rect x="7" y="14" width="1" height="1" fill="#000"/><rect x="5" y="15" width="2" height="1" fill="#000"/></svg><svg class="ab " style="left:655px;top:60px" width="16" height="10" viewBox="0 0 16 10" shape-rendering="crispEdges"><rect x="1" y="0" width="10" height="1" fill="#000"/><rect x="11" y="0" width="4" height="1" fill="#000080"/><rect x="0" y="1" width="1" height="1" fill="#000"/><rect x="1" y="1" width="10" height="1" fill="#fff"/><rect x="11" y="1" width="1" height="1" fill="#000080"/><rect x="12" y="1" width="3" height="1" fill="#00ffff"/><rect x="15" y="1" width="1" height="1" fill="#000080"/><rect x="0" y="2" width="1" height="1" fill="#000"/><rect x="1" y="2" width="1" height="1" fill="#fff"/><rect x="2" y="2" width="3" height="1" fill="#000"/><rect x="5" y="2" width="6" height="1" fill="#fff"/><rect x="11" y="2" width="5" height="1" fill="#000080"/><rect x="0" y="3" width="1" height="1" fill="#000"/><rect x="1" y="3" width="10" height="1" fill="#fff"/><rect x="11" y="3" width="1" height="1" fill="#000080"/><rect x="12" y="3" width="1" height="1" fill="#00ffff"/><rect x="13" y="3" width="1" height="1" fill="#000080"/><rect x="14" y="3" width="1" height="1" fill="#fff"/><rect x="15" y="3" width="1" height="1" fill="#000080"/><rect x="0" y="4" width="1" height="1" fill="#000"/><rect x="1" y="4" width="2" height="1" fill="#fff"/><rect x="3" y="4" width="7" height="1" fill="#000"/><rect x="10" y="4" width="1" height="1" fill="#fff"/><rect x="11" y="4" width="1" height="1" fill="#000080"/><rect x="12" y="4" width="1" height="1" fill="#00ffff"/><rect x="13" y="4" width="3" height="1" fill="#000080"/><rect x="0" y="5" width="1" height="1" fill="#000"/><rect x="1" y="5" width="10" height="1" fill="#fff"/><rect x="11" y="5" width="5" height="1" fill="#000080"/><rect x="0" y="6" width="1" height="1" fill="#000"/><rect x="1" y="6" width="14" height="1" fill="#fff"/><rect x="15" y="6" width="1" height="1" fill="#000"/><rect x="0" y="7" width="1" height="1" fill="#000"/><rect x="1" y="7" width="2" height="1" fill="#fff"/><rect x="3" y="7" width="5" height="1" fill="#000"/><rect x="8" y="7" width="7" height="1" fill="#fff"/><rect x="15" y="7" width="1" height="1" fill="#000"/><rect x="0" y="8" width="1" height="1" fill="#000"/><rect x="1" y="8" width="14" height="1" fill="#fff"/><rect x="15" y="8" width="1" height="1" fill="#000"/><rect x="1" y="9" width="14" height="1" fill="#000"/></svg><div class="ab" style="left:2px;top:78px;width:32px;height:651px;border:1px solid #a0a0a0;box-shadow:inset 1px 1px 0 #fff"></div><div class="sbtn" style="top:85px"></div><div class="sbtn" style="top:117px"></div><div class="sbtn" style="top:140px"></div><div class="sbtn" style="top:163px"></div><div class="sbtn" style="top:190px"></div><div class="sbtn" style="top:218px"></div><div class="sbtn" style="top:246px"></div><div class="sbtn" style="top:277px"></div><div class="sbtn" style="top:308px"></div><div class="sbtn" style="top:335px"></div><div class="ssep" style="top:111px"></div><div class="ssep" style="top:272px"></div><div class="ssep" style="top:303px"></div><svg class="ab " style="left:11px;top:89px" width="16" height="15" viewBox="0 0 16 15" shape-rendering="crispEdges"><rect x="13" y="0" width="1" height="1" fill="#000"/><rect x="14" y="0" width="2" height="1" fill="#808000"/><rect x="12" y="1" width="1" height="1" fill="#000"/><rect x="13" y="1" width="3" height="1" fill="#808000"/><rect x="11" y="2" width="1" height="1" fill="#000"/><rect x="12" y="2" width="4" height="1" fill="#808000"/><rect x="10" y="3" width="1" height="1" fill="#000"/><rect x="11" y="3" width="5" height="1" fill="#808000"/><rect x="9" y="4" width="1" height="1" fill="#000"/><rect x="10" y="4" width="6" height="1" fill="#808000"/><rect x="8" y="5" width="2" height="1" fill="#000"/><rect x="10" y="5" width="5" height="1" fill="#808000"/><rect x="15" y="5" width="1" height="1" fill="#000"/><rect x="6" y="6" width="3" height="1" fill="#000"/><rect x="9" y="6" width="5" height="1" fill="#808000"/><rect x="14" y="6" width="1" height="1" fill="#000"/><rect x="6" y="7" width="1" height="1" fill="#000"/><rect x="7" y="7" width="2" height="1" fill="#fff"/><rect x="9" y="7" width="1" height="1" fill="#000"/><rect x="10" y="7" width="3" height="1" fill="#808000"/><rect x="13" y="7" width="1" height="1" fill="#000"/><rect x="5" y="8" width="2" height="1" fill="#000"/><rect x="7" y="8" width="3" height="1" fill="#fff"/><rect x="10" y="8" width="1" height="1" fill="#000"/><rect x="11" y="8" width="1" height="1" fill="#808000"/><rect x="12" y="8" width="1" height="1" fill="#000"/><rect x="4" y="9" width="2" height="1" fill="#000"/><rect x="6" y="9" width="4" height="1" fill="#fff"/><rect x="10" y="9" width="2" height="1" fill="#000"/><rect x="4" y="10" width="2" height="1" fill="#000"/><rect x="6" y="10" width="3" height="1" fill="#fff"/><rect x="9" y="10" width="2" height="1" fill="#000"/><rect x="3" y="11" width="3" height="1" fill="#000"/><rect x="6" y="11" width="2" height="1" fill="#fff"/><rect x="8" y="11" width="2" height="1" fill="#000"/><rect x="2" y="12" width="5" height="1" fill="#000"/><rect x="7" y="12" width="1" height="1" fill="#fff"/><rect x="8" y="12" width="1" height="1" fill="#000"/><rect x="1" y="13" width="7" height="1" fill="#000"/><rect x="0" y="14" width="6" height="1" fill="#000"/></svg><svg class="ab" style="left:7px;top:117px" width="23" height="22" shape-rendering="crispEdges" fill="none"><path d="M18.5 4v9.5H8M5.5 15.5h11M3.5 17.5h11.5" stroke="#a0a0a0"/><path d="M19.5 4v10.5H9M6.5 16.5h11M4.5 18.5h11.5" stroke="#fff"/></svg><svg class="ab" style="left:7px;top:140px" width="23" height="22" shape-rendering="crispEdges" fill="none"><path d="M18.5 4v9.5H8M5.5 15.5h11M3.5 17.5h11.5" stroke="#a0a0a0"/><path d="M19.5 4v10.5H9M6.5 16.5h11M4.5 18.5h11.5" stroke="#fff"/></svg><svg class="ab" style="left:7px;top:163px" width="23" height="22" fill="none" stroke-width="1"><g stroke="#fff" transform="translate(1 1)"><path d="M4.500 7L6.500 3.500 8.500 7M5.500 7V12.500H14M7.500 7V9M11 3.500L19.500 11.500M19.500 7V11.500H16M17.500 11.500V18.500H14.500M12 14l2 2M11.500 17l3-3M8 8l4 4M8 12l4-4M8 10h4.500M10 7.500v5"/><circle cx="10" cy="10" r="2.800"/><circle cx="14.500" cy="16" r="2.600"/></g><g stroke="#a0a0a0"><path d="M4.500 7L6.500 3.500 8.500 7M5.500 7V12.500H14M7.500 7V9M11 3.500L19.500 11.500M19.500 7V11.500H16M17.500 11.500V18.500H14.500M12 14l2 2M11.500 17l3-3M8 8l4 4M8 12l4-4M8 10h4.500M10 7.500v5"/><circle cx="10" cy="10" r="2.800"/><circle cx="14.500" cy="16" r="2.600"/></g></svg><svg class="ab" style="left:7px;top:190px" width="23" height="22" fill="none" stroke-width="1"><g stroke="#fff" transform="translate(1 1)"><path d="M12.500 4V9M19.500 5L16 9M5.500 6H8V12M4 13.500H19.500M5.500 19L9 15.500M12.500 15.500V19.500M14 18.500L18.500 16.500M8.500 9l4 4M8.500 13l4-4M10.500 8v5"/><circle cx="10.500" cy="10.800" r="3"/><circle cx="15" cy="13.300" r="4.300"/></g><g stroke="#a0a0a0"><path d="M12.500 4V9M19.500 5L16 9M5.500 6H8V12M4 13.500H19.500M5.500 19L9 15.500M12.500 15.500V19.500M14 18.500L18.500 16.500M8.500 9l4 4M8.500 13l4-4M10.500 8v5"/><circle cx="10.500" cy="10.800" r="3"/><circle cx="15" cy="13.300" r="4.300"/></g></svg><svg class="ab" style="left:7px;top:218px" width="23" height="22" shape-rendering="crispEdges" fill="none" stroke="#808080"><path d="M4.500 4v14" stroke-dasharray="1 1"/><path d="M5 5.500h3M5 16.500h3M11 11.500h3" stroke-dasharray="1 1"/><rect x="8.500" y="3.500" width="5" height="5"/><rect x="10.500" y="5.500" width="2" height="2"/><rect x="8.500" y="14.500" width="5" height="5"/><rect x="10.500" y="16.500" width="2" height="2"/><rect x="14.500" y="9.500" width="5" height="5"/><rect x="16.500" y="11.500" width="2" height="2"/></svg><svg class="ab" style="left:7px;top:246px" width="23" height="22" shape-rendering="crispEdges" fill="none" stroke="#808080"><path d="M4.500 4v14" stroke-dasharray="1 1"/><path d="M5 5.500h3M5 16.500h3M11 11.500h3" stroke-dasharray="1 1"/><rect x="8.500" y="3.500" width="5" height="5"/><rect x="8.500" y="14.500" width="5" height="5"/><rect x="14.500" y="9.500" width="5" height="5"/></svg><svg class="ab " style="left:12px;top:281px" width="15" height="15" viewBox="0 0 15 15" shape-rendering="crispEdges"><rect x="9" y="0" width="6" height="1" fill="#000"/><rect x="8" y="1" width="1" height="1" fill="#000"/><rect x="9" y="1" width="5" height="1" fill="#fff"/><rect x="14" y="1" width="1" height="1" fill="#000"/><rect x="1" y="2" width="2" height="1" fill="#000"/><rect x="7" y="2" width="1" height="1" fill="#000"/><rect x="8" y="2" width="5" height="1" fill="#fff"/><rect x="13" y="2" width="1" height="1" fill="#000"/><rect x="0" y="3" width="1" height="1" fill="#000"/><rect x="1" y="3" width="2" height="1" fill="#0000d0"/><rect x="3" y="3" width="1" height="1" fill="#000"/><rect x="5" y="3" width="3" height="1" fill="#000"/><rect x="8" y="3" width="4" height="1" fill="#fff"/><rect x="12" y="3" width="1" height="1" fill="#000"/><rect x="0" y="4" width="1" height="1" fill="#000"/><rect x="1" y="4" width="2" height="1" fill="#0000d0"/><rect x="3" y="4" width="2" height="1" fill="#000"/><rect x="5" y="4" width="3" height="1" fill="#ffff00"/><rect x="8" y="4" width="1" height="1" fill="#000"/><rect x="9" y="4" width="2" height="1" fill="#fff"/><rect x="11" y="4" width="1" height="1" fill="#000"/><rect x="1" y="5" width="2" height="1" fill="#0000d0"/><rect x="3" y="5" width="1" height="1" fill="#000"/><rect x="4" y="5" width="1" height="1" fill="#ffff00"/><rect x="5" y="5" width="2" height="1" fill="#000"/><rect x="7" y="5" width="2" height="1" fill="#ffff00"/><rect x="9" y="5" width="2" height="1" fill="#000"/><rect x="1" y="6" width="2" height="1" fill="#0000d0"/><rect x="3" y="6" width="4" height="1" fill="#000"/><rect x="7" y="6" width="2" height="1" fill="#ffff00"/><rect x="9" y="6" width="3" height="1" fill="#ff00ff"/><rect x="12" y="6" width="1" height="1" fill="#000"/><rect x="1" y="7" width="2" height="1" fill="#0000d0"/><rect x="3" y="7" width="1" height="1" fill="#000"/><rect x="6" y="7" width="1" height="1" fill="#000"/><rect x="7" y="7" width="1" height="1" fill="#ffff00"/><rect x="8" y="7" width="1" height="1" fill="#ff00ff"/><rect x="9" y="7" width="2" height="1" fill="#000"/><rect x="11" y="7" width="2" height="1" fill="#ff00ff"/><rect x="13" y="7" width="1" height="1" fill="#000"/><rect x="1" y="8" width="2" height="1" fill="#0000d0"/><rect x="3" y="8" width="1" height="1" fill="#000"/><rect x="5" y="8" width="1" height="1" fill="#000"/><rect x="6" y="8" width="2" height="1" fill="#ffff00"/><rect x="8" y="8" width="3" height="1" fill="#000"/><rect x="11" y="8" width="2" height="1" fill="#ff00ff"/><rect x="13" y="8" width="1" height="1" fill="#000"/><rect x="0" y="9" width="5" height="1" fill="#000"/><rect x="5" y="9" width="2" height="1" fill="#ffff00"/><rect x="7" y="9" width="2" height="1" fill="#000"/><rect x="9" y="9" width="3" height="1" fill="#ff00ff"/><rect x="12" y="9" width="1" height="1" fill="#000"/><rect x="3" y="10" width="1" height="1" fill="#000"/><rect x="4" y="10" width="5" height="1" fill="#ffff00"/><rect x="9" y="10" width="2" height="1" fill="#000"/><rect x="11" y="10" width="2" height="1" fill="#ff00ff"/><rect x="13" y="10" width="1" height="1" fill="#000"/><rect x="3" y="11" width="8" height="1" fill="#000"/><rect x="11" y="11" width="2" height="1" fill="#ff00ff"/><rect x="13" y="11" width="1" height="1" fill="#000"/><rect x="7" y="12" width="1" height="1" fill="#000"/><rect x="8" y="12" width="1" height="1" fill="#ff00ff"/><rect x="9" y="12" width="2" height="1" fill="#000"/><rect x="11" y="12" width="2" height="1" fill="#ff00ff"/><rect x="13" y="12" width="1" height="1" fill="#000"/><rect x="7" y="13" width="1" height="1" fill="#000"/><rect x="8" y="13" width="4" height="1" fill="#ff00ff"/><rect x="12" y="13" width="1" height="1" fill="#000"/><rect x="8" y="14" width="4" height="1" fill="#000"/></svg><svg class="ab " style="left:12px;top:312px" width="14" height="16" viewBox="0 0 14 16" shape-rendering="crispEdges"><rect x="4" y="0" width="6" height="1" fill="#000"/><rect x="0" y="1" width="3" height="1" fill="#000"/><rect x="4" y="1" width="1" height="1" fill="#000"/><rect x="5" y="1" width="4" height="1" fill="#ffff00"/><rect x="9" y="1" width="1" height="1" fill="#000"/><rect x="0" y="2" width="1" height="1" fill="#000"/><rect x="1" y="2" width="1" height="1" fill="#00e000"/><rect x="2" y="2" width="3" height="1" fill="#000"/><rect x="5" y="2" width="4" height="1" fill="#ffff00"/><rect x="9" y="2" width="1" height="1" fill="#000"/><rect x="0" y="3" width="3" height="1" fill="#000"/><rect x="4" y="3" width="1" height="1" fill="#000"/><rect x="5" y="3" width="4" height="1" fill="#ffff00"/><rect x="9" y="3" width="1" height="1" fill="#000"/><rect x="1" y="4" width="1" height="1" fill="#000"/><rect x="4" y="4" width="6" height="1" fill="#000"/><rect x="1" y="5" width="1" height="1" fill="#000"/><rect x="6" y="5" width="1" height="1" fill="#000"/><rect x="9" y="5" width="5" height="1" fill="#000"/><rect x="1" y="6" width="1" height="1" fill="#000"/><rect x="5" y="6" width="3" height="1" fill="#000"/><rect x="9" y="6" width="1" height="1" fill="#000"/><rect x="10" y="6" width="3" height="1" fill="#ffff00"/><rect x="13" y="6" width="1" height="1" fill="#000"/><rect x="1" y="7" width="1" height="1" fill="#000"/><rect x="5" y="7" width="1" height="1" fill="#000"/><rect x="6" y="7" width="1" height="1" fill="#00e000"/><rect x="7" y="7" width="3" height="1" fill="#000"/><rect x="10" y="7" width="3" height="1" fill="#ffff00"/><rect x="13" y="7" width="1" height="1" fill="#000"/><rect x="1" y="8" width="1" height="1" fill="#000"/><rect x="5" y="8" width="3" height="1" fill="#000"/><rect x="9" y="8" width="1" height="1" fill="#000"/><rect x="10" y="8" width="3" height="1" fill="#ffff00"/><rect x="13" y="8" width="1" height="1" fill="#000"/><rect x="1" y="9" width="1" height="1" fill="#000"/><rect x="6" y="9" width="1" height="1" fill="#000"/><rect x="9" y="9" width="5" height="1" fill="#000"/><rect x="1" y="10" width="1" height="1" fill="#000"/><rect x="6" y="10" width="1" height="1" fill="#000"/><rect x="1" y="11" width="1" height="1" fill="#000"/><rect x="6" y="11" width="1" height="1" fill="#000"/><rect x="1" y="12" width="1" height="1" fill="#000"/><rect x="6" y="12" width="1" height="1" fill="#000"/><rect x="9" y="12" width="5" height="1" fill="#000"/><rect x="1" y="13" width="1" height="1" fill="#000"/><rect x="5" y="13" width="3" height="1" fill="#000"/><rect x="9" y="13" width="1" height="1" fill="#000"/><rect x="10" y="13" width="3" height="1" fill="#ffff00"/><rect x="13" y="13" width="1" height="1" fill="#000"/><rect x="1" y="14" width="1" height="1" fill="#000"/><rect x="5" y="14" width="1" height="1" fill="#000"/><rect x="6" y="14" width="1" height="1" fill="#00e000"/><rect x="7" y="14" width="3" height="1" fill="#000"/><rect x="10" y="14" width="3" height="1" fill="#ffff00"/><rect x="13" y="14" width="1" height="1" fill="#000"/><rect x="1" y="15" width="1" height="1" fill="#000"/><rect x="5" y="15" width="3" height="1" fill="#000"/><rect x="9" y="15" width="1" height="1" fill="#000"/><rect x="10" y="15" width="3" height="1" fill="#ffff00"/><rect x="13" y="15" width="1" height="1" fill="#000"/></svg><svg class="ab " style="left:12px;top:339px" width="10" height="16" viewBox="0 0 10 16" shape-rendering="crispEdges"><rect x="4" y="0" width="6" height="1" fill="#000"/><rect x="0" y="1" width="3" height="1" fill="#000"/><rect x="4" y="1" width="1" height="1" fill="#000"/><rect x="5" y="1" width="4" height="1" fill="#ffff00"/><rect x="9" y="1" width="1" height="1" fill="#000"/><rect x="0" y="2" width="1" height="1" fill="#000"/><rect x="1" y="2" width="1" height="1" fill="#00e000"/><rect x="2" y="2" width="3" height="1" fill="#000"/><rect x="5" y="2" width="4" height="1" fill="#ffff00"/><rect x="9" y="2" width="1" height="1" fill="#000"/><rect x="0" y="3" width="3" height="1" fill="#000"/><rect x="4" y="3" width="1" height="1" fill="#000"/><rect x="5" y="3" width="4" height="1" fill="#ffff00"/><rect x="9" y="3" width="1" height="1" fill="#000"/><rect x="1" y="4" width="1" height="1" fill="#000"/><rect x="4" y="4" width="6" height="1" fill="#000"/><rect x="1" y="5" width="1" height="1" fill="#000"/><rect x="1" y="6" width="1" height="1" fill="#000"/><rect x="4" y="6" width="6" height="1" fill="#000"/><rect x="0" y="7" width="3" height="1" fill="#000"/><rect x="4" y="7" width="1" height="1" fill="#000"/><rect x="5" y="7" width="4" height="1" fill="#ffff00"/><rect x="9" y="7" width="1" height="1" fill="#000"/><rect x="0" y="8" width="1" height="1" fill="#000"/><rect x="1" y="8" width="1" height="1" fill="#00e000"/><rect x="2" y="8" width="3" height="1" fill="#000"/><rect x="5" y="8" width="4" height="1" fill="#ffff00"/><rect x="9" y="8" width="1" height="1" fill="#000"/><rect x="0" y="9" width="3" height="1" fill="#000"/><rect x="4" y="9" width="1" height="1" fill="#000"/><rect x="5" y="9" width="4" height="1" fill="#ffff00"/><rect x="9" y="9" width="1" height="1" fill="#000"/><rect x="1" y="10" width="1" height="1" fill="#000"/><rect x="4" y="10" width="6" height="1" fill="#000"/><rect x="1" y="11" width="1" height="1" fill="#000"/><rect x="1" y="12" width="1" height="1" fill="#000"/><rect x="4" y="12" width="6" height="1" fill="#000"/><rect x="0" y="13" width="3" height="1" fill="#000"/><rect x="4" y="13" width="1" height="1" fill="#000"/><rect x="5" y="13" width="4" height="1" fill="#ffff00"/><rect x="9" y="13" width="1" height="1" fill="#000"/><rect x="0" y="14" width="1" height="1" fill="#000"/><rect x="1" y="14" width="1" height="1" fill="#00e000"/><rect x="2" y="14" width="3" height="1" fill="#000"/><rect x="5" y="14" width="4" height="1" fill="#ffff00"/><rect x="9" y="14" width="1" height="1" fill="#000"/><rect x="0" y="15" width="3" height="1" fill="#000"/><rect x="4" y="15" width="1" height="1" fill="#000"/><rect x="5" y="15" width="4" height="1" fill="#ffff00"/><rect x="9" y="15" width="1" height="1" fill="#000"/></svg><div class="ab" style="left:35px;top:78px;width:169px;height:651px;background:#fff;border:1px solid;border-color:#a0a0a0 #fff #fff #a0a0a0;box-shadow:inset 1px 1px 0 #696969,inset -1px -1px 0 #e3e3e3"></div><div class="ab" id="tree" style="left:37px;top:80px;width:165px;height:631px;overflow:hidden"><div class="dots-v" style="left:28px;top:14px;height:205px"></div><div class="dots-v" style="left:47px;top:56px;height:51px"></div><div class="dots-v" style="left:47px;top:126px;height:23px"></div><div class="dots-v" style="left:47px;top:168px;height:9px"></div><div class="dots-v" style="left:66px;top:182px;height:23px"></div><div class="dots-v" style="left:47px;top:224px;height:9px"></div><div class="dots-v" style="left:66px;top:238px;height:37px"></div><div class="dots-v" style="left:85px;top:280px;height:9px"></div><div class="dots-v" style="left:104px;top:294px;height:121px"></div><div class="dots-v" style="left:123px;top:378px;height:23px"></div><div class="exp" style="left:5px;top:4px"></div><div class="dots-h" style="left:15px;top:8px;width:3px"></div><svg class="jt " role="img" aria-label="1章 設計例" style="left:21px;top:0px;" width="62" height="14"><text x="0" y="11.3" font-size="12" fill="#000" textLength="60" lengthAdjust="spacingAndGlyphs">1章 設計例</text></svg><div class="dots-h" style="left:29px;top:22px;width:8px"></div><svg class="jt " role="img" aria-label="1.1 工事設計書" style="left:40px;top:14px;" width="86" height="14"><text x="0" y="11.3" font-size="12" fill="#000" textLength="84" lengthAdjust="spacingAndGlyphs">1.1 工事設計書</text></svg><div class="dots-h" style="left:29px;top:36px;width:8px"></div><svg class="jt " role="img" aria-label="1.2 総括表" style="left:40px;top:28px;" width="62" height="14"><text x="0" y="11.3" font-size="12" fill="#000" textLength="60" lengthAdjust="spacingAndGlyphs">1.2 総括表</text></svg><div class="exp" style="left:24px;top:46px"></div><div class="dots-h" style="left:34px;top:50px;width:3px"></div><svg class="jt " role="img" aria-label="1.3 内訳書" style="left:40px;top:42px;" width="62" height="14"><text x="0" y="11.3" font-size="12" fill="#000" textLength="60" lengthAdjust="spacingAndGlyphs">1.3 内訳書</text></svg><div class="dots-h" style="left:48px;top:64px;width:8px"></div><svg class="jt " role="img" aria-label="1.3.1 第 1 号内訳書" style="left:59px;top:56px;" width="116" height="14"><text x="0" y="11.3" font-size="12" fill="#000" textLength="114" lengthAdjust="spacingAndGlyphs">1.3.1 第 1 号内訳書</text></svg><div class="dots-h" style="left:48px;top:78px;width:8px"></div><svg class="jt " role="img" aria-label="1.3.2 第 2 号内訳書" style="left:59px;top:70px;" width="116" height="14"><text x="0" y="11.3" font-size="12" fill="#000" textLength="114" lengthAdjust="spacingAndGlyphs">1.3.2 第 2 号内訳書</text></svg><div class="dots-h" style="left:48px;top:92px;width:8px"></div><svg class="jt " role="img" aria-label="1.3.3 第 3 号内訳書" style="left:59px;top:84px;" width="116" height="14"><text x="0" y="11.3" font-size="12" fill="#000" textLength="114" lengthAdjust="spacingAndGlyphs">1.3.3 第 3 号内訳書</text></svg><div class="dots-h" style="left:48px;top:106px;width:8px"></div><svg class="jt " role="img" aria-label="1.3.4 第 4 号内訳書" style="left:59px;top:98px;" width="116" height="14"><text x="0" y="11.3" font-size="12" fill="#000" textLength="114" lengthAdjust="spacingAndGlyphs">1.3.4 第 4 号内訳書</text></svg><div class="exp" style="left:24px;top:116px"></div><div class="dots-h" style="left:34px;top:120px;width:3px"></div><svg class="jt " role="img" aria-label="1.4 単価表" style="left:40px;top:112px;" width="62" height="14"><text x="0" y="11.3" font-size="12" fill="#000" textLength="60" lengthAdjust="spacingAndGlyphs">1.4 単価表</text></svg><div class="dots-h" style="left:48px;top:134px;width:8px"></div><svg class="jt " role="img" aria-label="1.4.1 第 1 号単価表" style="left:59px;top:126px;" width="116" height="14"><text x="0" y="11.3" font-size="12" fill="#000" textLength="114" lengthAdjust="spacingAndGlyphs">1.4.1 第 1 号単価表</text></svg><div class="dots-h" style="left:48px;top:148px;width:8px"></div><svg class="jt " role="img" aria-label="1.4.2 第 2 号単価表" style="left:59px;top:140px;" width="116" height="14"><text x="0" y="11.3" font-size="12" fill="#000" textLength="114" lengthAdjust="spacingAndGlyphs">1.4.2 第 2 号単価表</text></svg><div class="exp" style="left:24px;top:158px"></div><div class="dots-h" style="left:34px;top:162px;width:3px"></div><svg class="jt " role="img" aria-label="1.5 構造図" style="left:40px;top:154px;" width="62" height="14"><text x="0" y="11.3" font-size="12" fill="#000" textLength="60" lengthAdjust="spacingAndGlyphs">1.5 構造図</text></svg><div class="exp" style="left:43px;top:172px"></div><div class="dots-h" style="left:53px;top:176px;width:3px"></div><svg class="jt " role="img" aria-label="1.5.1 BOX" style="left:59px;top:168px;" width="56" height="14"><text x="0" y="11.3" font-size="12" fill="#000" textLength="54" lengthAdjust="spacingAndGlyphs">1.5.1 BOX</text></svg><div class="dots-h" style="left:67px;top:190px;width:8px"></div><svg class="jt " role="img" aria-label="(1)正面図（左口）" style="left:78px;top:182px;" width="104" height="14"><text x="0" y="11.3" font-size="12" fill="#000" textLength="102" lengthAdjust="spacingAndGlyphs">(1)正面図（左口）</text></svg><div class="dots-h" style="left:67px;top:204px;width:8px"></div><svg class="jt " role="img" aria-label="(2)正面図（右口）" style="left:78px;top:196px;" width="104" height="14"><text x="0" y="11.3" font-size="12" fill="#000" textLength="102" lengthAdjust="spacingAndGlyphs">(2)正面図（右口）</text></svg><div class="exp" style="left:24px;top:214px"></div><div class="dots-h" style="left:34px;top:218px;width:3px"></div><svg class="jt " role="img" aria-label="1.6 数量計算過程" style="left:40px;top:210px;" width="98" height="14"><text x="0" y="11.3" font-size="12" fill="#000" textLength="96" lengthAdjust="spacingAndGlyphs">1.6 数量計算過程</text></svg><div class="exp" style="left:43px;top:228px"></div><div class="dots-h" style="left:53px;top:232px;width:3px"></div><svg class="jt " role="img" aria-label="1.6.1 BOX" style="left:59px;top:224px;" width="56" height="14"><text x="0" y="11.3" font-size="12" fill="#000" textLength="54" lengthAdjust="spacingAndGlyphs">1.6.1 BOX</text></svg><div class="dots-h" style="left:67px;top:246px;width:8px"></div><svg class="jt " role="img" aria-label="総括表" style="left:78px;top:238px;" width="38" height="14"><text x="0" y="11.3" font-size="12" fill="#000" textLength="36" lengthAdjust="spacingAndGlyphs">総括表</text></svg><div class="dots-h" style="left:67px;top:260px;width:8px"></div><svg class="jt " role="img" aria-label="躯体寸法" style="left:78px;top:252px;" width="50" height="14"><text x="0" y="11.3" font-size="12" fill="#000" textLength="48" lengthAdjust="spacingAndGlyphs">躯体寸法</text></svg><div class="exp" style="left:62px;top:270px"></div><div class="dots-h" style="left:72px;top:274px;width:3px"></div><div class="ab" style="left:76px;top:266px;width:52px;height:14px;background:#0078d7"></div><svg class="jt " role="img" aria-label="数量算出" style="left:78px;top:266px;" width="50" height="14"><text x="0" y="11.3" font-size="12" fill="#fff" textLength="48" lengthAdjust="spacingAndGlyphs">数量算出</text></svg><div class="exp" style="left:81px;top:284px"></div><div class="dots-h" style="left:91px;top:288px;width:3px"></div><svg class="jt " role="img" aria-label="本体" style="left:97px;top:280px;" width="26" height="14"><text x="0" y="11.3" font-size="12" fill="#000" textLength="24" lengthAdjust="spacingAndGlyphs">本体</text></svg><div class="dots-h" style="left:105px;top:302px;width:8px"></div><svg class="jt " role="img" aria-label="頂版" style="left:116px;top:294px;" width="26" height="14"><text x="0" y="11.3" font-size="12" fill="#000" textLength="24" lengthAdjust="spacingAndGlyphs">頂版</text></svg><div class="dots-h" style="left:105px;top:316px;width:8px"></div><svg class="jt " role="img" aria-label="底版" style="left:116px;top:308px;" width="26" height="14"><text x="0" y="11.3" font-size="12" fill="#000" textLength="24" lengthAdjust="spacingAndGlyphs">底版</text></svg><div class="dots-h" style="left:105px;top:330px;width:8px"></div><svg class="jt " role="img" aria-label="左側壁" style="left:116px;top:322px;" width="38" height="14"><text x="0" y="11.3" font-size="12" fill="#000" textLength="36" lengthAdjust="spacingAndGlyphs">左側壁</text></svg><div class="dots-h" style="left:105px;top:344px;width:8px"></div><svg class="jt " role="img" aria-label="中壁" style="left:116px;top:336px;" width="26" height="14"><text x="0" y="11.3" font-size="12" fill="#000" textLength="24" lengthAdjust="spacingAndGlyphs">中壁</text></svg><div class="dots-h" style="left:105px;top:358px;width:8px"></div><svg class="jt " role="img" aria-label="右側壁" style="left:116px;top:350px;" width="38" height="14"><text x="0" y="11.3" font-size="12" fill="#000" textLength="36" lengthAdjust="spacingAndGlyphs">右側壁</text></svg><div class="exp" style="left:100px;top:368px"></div><div class="dots-h" style="left:110px;top:372px;width:3px"></div><svg class="jt " role="img" aria-label="ハンチ" style="left:116px;top:364px;" width="38" height="14"><text x="0" y="11.3" font-size="12" fill="#000" textLength="36" lengthAdjust="spacingAndGlyphs">ハンチ</text></svg><div class="dots-h" style="left:124px;top:386px;width:8px"></div><svg class="jt " role="img" aria-label="左内空" style="left:135px;top:378px;" width="38" height="14"><text x="0" y="11.3" font-size="12" fill="#000" textLength="36" lengthAdjust="spacingAndGlyphs">左内空</text></svg><div class="dots-h" style="left:124px;top:400px;width:8px"></div><svg class="jt " role="img" aria-label="右内空" style="left:135px;top:392px;" width="38" height="14"><text x="0" y="11.3" font-size="12" fill="#000" textLength="36" lengthAdjust="spacingAndGlyphs">右内空</text></svg><div class="dots-h" style="left:105px;top:414px;width:8px"></div><svg class="jt " role="img" aria-label="基礎" style="left:116px;top:406px;" width="26" height="14"><text x="0" y="11.3" font-size="12" fill="#000" textLength="24" lengthAdjust="spacingAndGlyphs">基礎</text></svg></div><div class="ab" style="left:37px;top:711px;width:165px;height:17px;background:#f0f0f0"></div><div class="ab" style="left:54px;top:712px;width:75px;height:15px;background:#cdcdcd"></div><svg class="ab" style="left:37px;top:711px" width="165" height="17" fill="none" stroke="#505050" stroke-width="2"><path d="M10 4.500l-4.500 4 4.500 4"/><path d="M155 4.500l4.500 4-4.500 4"/></svg><div class="ab dither" style="left:206px;top:78px;width:65px;height:20px;border:1px solid;border-color:#a0a0a0 #fff #fff #a0a0a0;box-shadow:inset 1px 1px 0 #696969"></div><svg class="jt " role="img" aria-label="プレビュー" style="left:213px;top:81px;" width="53" height="15"><text x="0" y="11.4" font-size="12" fill="#000" textLength="51" lengthAdjust="spacingAndGlyphs">プレビュー</text></svg><div class="ab" style="left:275px;top:79px;width:2px;height:19px;border-left:1px solid #a0a0a0;border-right:1px solid #fff"></div><svg class="jt " role="img" aria-label="ソース" style="left:286.5px;top:81px;" width="33" height="15"><text x="0" y="11.4" font-size="12" fill="#000" textLength="31" lengthAdjust="spacingAndGlyphs">ソース</text></svg><div class="ab" style="left:330px;top:79px;width:2px;height:19px;border-left:1px solid #a0a0a0;border-right:1px solid #fff"></div><div class="ab" style="left:210px;top:104px;width:853px;height:605px;border:1px solid;border-color:#a0a0a0 #fff #fff #a0a0a0;background:#fff"></div><div class="ab" style="left:212px;top:106px;width:850px;height:602px;background:#696969"></div><div class="ab" style="left:215px;top:109px;width:842px;height:595px;background:#000"></div><div class="ab" id="page" style="left:216px;top:110px;width:840px;height:593px;background:#fff"></div><div class="ab dither" style="left:1063px;top:105px;width:16px;height:605px"></div><div class="ab dither" style="left:432px;top:710px;width:631px;height:16px"></div><div class="scbtn" style="left:1063px;top:105px"></div><div class="scbtn" style="left:1063px;top:694px"></div><div class="scbtn" style="left:432px;top:710px"></div><div class="scbtn" style="left:1063px;top:710px"></div><svg class="ab" style="left:1063px;top:105px" width="16" height="16"><path d="M4 9.500h8l-4-4.500z" fill="#fff" transform="translate(1 1)"/><path d="M4 9.500h8l-4-4.500z" fill="#a0a0a0"/></svg><svg class="ab" style="left:1063px;top:694px" width="16" height="16"><path d="M4 6h8l-4 4.500z" fill="#fff" transform="translate(1 1)"/><path d="M4 6h8l-4 4.500z" fill="#a0a0a0"/></svg><svg class="ab" style="left:432px;top:710px" width="16" height="16"><path d="M9.500 4v8l-4.500-4z" fill="#fff" transform="translate(1 1)"/><path d="M9.500 4v8l-4.500-4z" fill="#a0a0a0"/></svg><svg class="ab" style="left:1063px;top:710px" width="16" height="16"><path d="M6.500 4v8l4.500-4z" fill="#fff" transform="translate(1 1)"/><path d="M6.500 4v8l4.500-4z" fill="#a0a0a0"/></svg><svg class="ab " style="left:216px;top:715px" width="7" height="7" viewBox="0 0 7 7" shape-rendering="crispEdges"><rect x="5" y="0" width="2" height="1" fill="#000"/><rect x="4" y="1" width="3" height="1" fill="#000"/><rect x="2" y="2" width="5" height="1" fill="#000"/><rect x="0" y="3" width="7" height="1" fill="#000"/><rect x="2" y="4" width="5" height="1" fill="#000"/><rect x="4" y="5" width="3" height="1" fill="#000"/><rect x="5" y="6" width="2" height="1" fill="#000"/></svg><svg class="ab " style="left:231px;top:715px" width="7" height="7" viewBox="0 0 7 7" shape-rendering="crispEdges"><rect x="5" y="0" width="2" height="1" fill="#000"/><rect x="4" y="1" width="3" height="1" fill="#000"/><rect x="2" y="2" width="5" height="1" fill="#000"/><rect x="0" y="3" width="7" height="1" fill="#000"/><rect x="2" y="4" width="5" height="1" fill="#000"/><rect x="4" y="5" width="3" height="1" fill="#000"/><rect x="5" y="6" width="2" height="1" fill="#000"/></svg><svg class="ab " style="left:310px;top:715px" width="7" height="7" viewBox="0 0 7 7" shape-rendering="crispEdges"><rect x="0" y="0" width="2" height="1" fill="#000"/><rect x="0" y="1" width="3" height="1" fill="#000"/><rect x="0" y="2" width="5" height="1" fill="#000"/><rect x="0" y="3" width="7" height="1" fill="#000"/><rect x="0" y="4" width="5" height="1" fill="#000"/><rect x="0" y="5" width="3" height="1" fill="#000"/><rect x="0" y="6" width="2" height="1" fill="#000"/></svg><svg class="ab " style="left:326px;top:715px" width="7" height="7" viewBox="0 0 7 7" shape-rendering="crispEdges"><rect x="0" y="0" width="2" height="1" fill="#000"/><rect x="0" y="1" width="3" height="1" fill="#000"/><rect x="0" y="2" width="5" height="1" fill="#000"/><rect x="0" y="3" width="7" height="1" fill="#000"/><rect x="0" y="4" width="5" height="1" fill="#000"/><rect x="0" y="5" width="3" height="1" fill="#000"/><rect x="0" y="6" width="2" height="1" fill="#000"/></svg><svg class="ab" style="left:214px;top:715px" width="122" height="7"><rect x="1" y="0" width="1.500" height="7"/><rect x="118.800" y="0" width="1.500" height="7"/></svg><div class="ab" style="left:244px;top:711px;width:61px;height:15px;background:#fff;border:1px solid;border-color:#a0a0a0 #fff #fff #a0a0a0;text-align:center;font-size:12px;line-height:13px"><span style="display:inline-block;transform:scaleX(.92)">15/31</span></div><div class="ab" style="left:351px;top:711px;width:80px;height:15px;font-size:12px;line-height:14px;white-space:pre;transform:scaleX(.925);transform-origin:0 0">297 x 210mm</div><div class="ab" style="left:1px;top:730px;width:1083px;height:1px;background:#a0a0a0"></div><div class="ab" style="left:1px;top:731px;width:1083px;height:1px;background:#fff"></div><div class="ab" style="left:1px;top:733px;width:182px;height:17px;border:1px solid;border-color:#a0a0a0 #fff #fff #a0a0a0"></div><div class="ab" style="left:185px;top:733px;width:898px;height:17px;border:1px solid;border-color:#a0a0a0 #fff #fff #a0a0a0"></div><svg class="ab" style="left:1068px;top:735px" width="15" height="15" stroke="#a0a0a0" stroke-width="1" fill="none"><path d="M14 2L2 14M14 6L6 14M14 10l-4 4"/></svg><div class="ab" style="left:0;top:0;width:1085px;height:1px;background:#5c5a5b"></div><div class="ab" style="left:0;top:0;width:1px;height:31px;background:#4f4d4e"></div><div class="ab" style="left:1084px;top:0;width:1px;height:31px;background:#4f4d4e"></div><div class="ab" style="left:0;top:31px;width:1px;height:720px;background:#4b494a"></div><div class="ab" style="left:1083px;top:31px;width:1px;height:720px;background:#7a7a7a"></div><div class="ab" style="left:1084px;top:31px;width:1px;height:720px;background:#444"></div><div class="ab" style="left:0;top:750px;width:1085px;height:1px;background:#4b494a"></div><div class="doc" style="left:953px;top:660px;font-size:20px;line-height:22px;transform:scaleX(0.735);transform-origin:0 0">FORUM8</div><svg class="jt " role="img" aria-label="数量算出" style="left:263px;top:156px;" width="42" height="13"><text class="dm" x="0" y="10" font-size="10" fill="#000" textLength="40" lengthAdjust="spacingAndGlyphs">数量算出</text></svg><svg class="jt " role="img" aria-label="本体" style="left:263px;top:171px;" width="22" height="13"><text class="dm" x="0" y="10" font-size="10" fill="#000" textLength="20" lengthAdjust="spacingAndGlyphs">本体</text></svg><svg class="jt " role="img" aria-label="頂版" style="left:263px;top:201px;" width="22" height="13"><text class="dm" x="0" y="10" font-size="10" fill="#000" textLength="20" lengthAdjust="spacingAndGlyphs">頂版</text></svg><svg class="ab" id="drawing" style="left:0;top:0" width="1085" height="751" fill="none" stroke="#000" stroke-width="1" font-family="Liberation Sans, sans-serif"><rect x="257.500" y="151.500" width="757" height="510" shape-rendering="crispEdges"/><g shape-rendering="crispEdges"><path d="M299.500 270.500H463.500"/><path d="M299.500 268.500V371.500H463.500V268.500"/><path d="M281.500 287.500H463.500M281.500 299.500H463.500"/><path d="M282.500 287.500V299.500M291.500 287.500V299.500"/><path d="M464 287.500H470.500V299.500"/></g><path d="M299.500 270.500l3-1.500M463.500 270.500l-3-1.500M282.500 287.500l-1 3M282.500 299.500l-1-3M291.500 299.500l-1.500-3M470.500 299.500l1.500-2" stroke-width="1"/><path d="M311.500 309.500L321.500 299.500M360.500 299.500L371.500 310.500V359.500H311.500V309.500" /><path d="M390.500 310.500L401.500 299.500M440.500 299.500L451.500 310.500V359.500H390.500V310.500" /><ellipse cx="381.200" cy="293" rx="7.800" ry="5.400" fill="#fff"/><g shape-rendering="crispEdges"><rect x="544" y="236" width="96" height="141" stroke-width="2"/><path d="M526.500 236.500V377.500M526.500 236.500H543M526.500 377.500H543"/><path d="M544.500 378V395.500M640.500 378V395.500M544.500 394.500H640.500"/><path d="M536.500 377.500V366M641 377.500H647.500V366"/></g><path d="M536.500 365.500l-1.500 3M536.500 365.500l1.500 3M647.500 365.500l-1.500 3M647.500 365.500l1.500 3M544.500 394.500l3 1.500M640.500 394.500l-3 1.500M526.500 236.500l1.500 3M526.500 377.500l-1.500-3"/><path d="M546.5 237V376" stroke-dasharray="4.500 3.600" stroke-dashoffset="2.400" stroke-width="1.200"/><path d="M551.5 237V376" stroke-dasharray="4.500 3.600" stroke-dashoffset="2.400" stroke-width="1.200"/><path d="M586.5 237V376" stroke-dasharray="4.500 3.600" stroke-dashoffset="2.400" stroke-width="1.200"/><path d="M590.5 237V376" stroke-dasharray="4.500 3.600" stroke-dashoffset="2.400" stroke-width="1.200"/><path d="M593.8 237V376" stroke-dasharray="4.500 3.600" stroke-dashoffset="2.400" stroke-width="1.200"/><path d="M597.6 237V376" stroke-dasharray="4.500 3.600" stroke-dashoffset="2.400" stroke-width="1.200"/><path d="M633.5 237V376" stroke-dasharray="4.500 3.600" stroke-dashoffset="2.400" stroke-width="1.200"/><path d="M637.5 237V376" stroke-dasharray="4.500 3.600" stroke-dashoffset="2.400" stroke-width="1.200"/><ellipse cx="597.700" cy="239.600" rx="6.900" ry="6.400" fill="#fff"/><ellipse cx="597.700" cy="373.400" rx="6.100" ry="6.100" fill="#fff"/><ellipse cx="536.900" cy="302.100" rx="9.700" ry="6.200" fill="#fff"/><ellipse cx="649.200" cy="310.200" rx="10" ry="5.900" fill="#fff"/><g fill="#000" stroke="none" font-size="9.500" text-anchor="middle"><text x="373" y="226.200">1-1</text><text x="586.500" y="226.200">2-2</text><text x="381" y="268.800">W</text><text x="592" y="392.500">W</text><text x="381.200" y="296.500" font-size="9.200">SC</text><text x="597.700" y="243" font-size="9.200">Sh</text><text x="597.700" y="376.800" font-size="9.200">Sz</text><text x="536.900" y="305.500" font-size="9.200">SsL</text><text x="649.200" y="313.600" font-size="9.200">SsR</text><text x="294.900" y="297.600" font-size="9.200">2</text><text x="466.900" y="297.600" font-size="9.200">2</text><text x="539.600" y="374" font-size="9.200">1</text><text x="643.800" y="374" font-size="9.200">1</text><text transform="translate(280.500 293.500) rotate(-90)" font-size="9.200">H</text><text transform="translate(525.200 306.500) rotate(-90)" font-size="9.200" text-anchor="start">L</text></g><g shape-rendering="crispEdges"><rect x="277.500" y="420.500" width="164" height="44"/><path d="M277.500 437.500H441.500M313.500 420.500V464.500M359.500 420.500V464.500M395.500 420.500V464.500"/><rect x="268.500" y="503.500" width="264" height="36"/><path d="M268.500 521.500H532.500M313.500 503.500V539.500M341.500 503.500V539.500"/><rect x="268.500" y="557.500" width="401" height="72"/><path d="M268.500 575.500H669.500M268.500 593.500H669.500M268.500 611.500H669.500M295.500 557.500V629.500"/></g></svg><svg class="jt " role="img" aria-label="記　号" style="left:281.5px;top:423.12px;" width="29" height="12"><text class="dm" x="0" y="9" font-size="9" fill="#000" textLength="27" lengthAdjust="spacingAndGlyphs">記　号</text></svg><svg class="jt " role="img" aria-label="寸 法(m)" style="left:318px;top:423.12px;" width="38" height="12"><text class="dm" x="0" y="9" font-size="9" fill="#000" textLength="36" lengthAdjust="spacingAndGlyphs" xml:space="preserve">寸 法(m)</text></svg><svg class="jt " role="img" aria-label="記　号" style="left:363.5px;top:423.12px;" width="29" height="12"><text class="dm" x="0" y="9" font-size="9" fill="#000" textLength="27" lengthAdjust="spacingAndGlyphs">記　号</text></svg><svg class="jt " role="img" aria-label="寸 法(m)" style="left:400px;top:423.12px;" width="38" height="12"><text class="dm" x="0" y="9" font-size="9" fill="#000" textLength="36" lengthAdjust="spacingAndGlyphs" xml:space="preserve">寸 法(m)</text></svg><svg class="jt " role="img" aria-label="※ WCは、直方向断面幅" style="left:263px;top:473.3px;" width="107" height="13"><text class="dm" x="0" y="10" font-size="10" fill="#000" textLength="105" lengthAdjust="spacingAndGlyphs">※ WCは、直方向断面幅</text></svg><svg class="jt " role="img" aria-label="■□■ 各部面積 ■□■" style="left:263px;top:486.8px;" width="112" height="13"><text class="dm" x="0" y="10" font-size="10" fill="#000" textLength="110" lengthAdjust="spacingAndGlyphs">■□■ 各部面積 ■□■</text></svg><svg class="jt " role="img" aria-label="切出位置" style="left:272px;top:506.648px;" width="40" height="12.6"><text class="dm" x="0" y="9.6" font-size="9.6" fill="#000" textLength="38.400" lengthAdjust="spacingAndGlyphs">切出位置</text></svg><svg class="jt " role="img" aria-label="記号" style="left:318px;top:506.648px;" width="21" height="12.6"><text class="dm" x="0" y="9.6" font-size="9.6" fill="#000" textLength="19.200" lengthAdjust="spacingAndGlyphs">記号</text></svg><svg class="jt " role="img" aria-label="面　積(㎡)" style="left:418px;top:506.772px;" width="49" height="12.4"><text class="dm" x="0.500" y="9.4" font-size="9.4" fill="#000" textLength="46.500" lengthAdjust="spacingAndGlyphs">面　積(㎡)</text></svg><svg class="jt " role="img" aria-label="記号" style="left:271.6px;top:560.972px;" width="20" height="12.4"><text class="dm" x="0" y="9.4" font-size="9.4" fill="#000" textLength="18.800" lengthAdjust="spacingAndGlyphs">記号</text></svg><svg class="jt " role="img" aria-label="面　積(㎡)" style="left:455px;top:560.972px;" width="49" height="12.4"><text class="dm" x="0.600" y="9.4" font-size="9.4" fill="#000" textLength="46.500" lengthAdjust="spacingAndGlyphs">面　積(㎡)</text></svg><svg class="ab" id="tabletext" style="left:0;top:0" width="1085" height="751" font-family="Liberation Serif, serif" font-size="9" text-anchor="middle" fill="#000" stroke="#000" stroke-width="0.15"><text font-size="10"><tspan x="985.70" y="150.90">-</tspan><tspan x="995.70" y="150.90">1</tspan><tspan x="1000.70" y="150.90">3</tspan><tspan x="1010.70" y="150.90">-</tspan></text><text><tspan x="283.55" y="450.27" textLength="4.32" lengthAdjust="spacingAndGlyphs">W</tspan><tspan x="288.05" y="450.27" textLength="4.32" lengthAdjust="spacingAndGlyphs">C</tspan></text><text><tspan x="283.55" y="459.37" textLength="4.32" lengthAdjust="spacingAndGlyphs">H</tspan></text><text><tspan x="334.25" y="450.27">8</tspan><tspan x="338.75" y="450.27">.</tspan><tspan x="343.25" y="450.27">0</tspan><tspan x="347.75" y="450.27">0</tspan><tspan x="352.25" y="450.27">0</tspan></text><text><tspan x="334.25" y="459.37">0</tspan><tspan x="338.75" y="459.37">.</tspan><tspan x="343.25" y="459.37">3</tspan><tspan x="347.75" y="459.37">5</tspan><tspan x="352.25" y="459.37">0</tspan></text><text><tspan x="365.65" y="450.27" textLength="4.32" lengthAdjust="spacingAndGlyphs">L</tspan></text><text><tspan x="411.75" y="450.27">1</tspan><tspan x="416.25" y="450.27">0</tspan><tspan x="420.75" y="450.27">.</tspan><tspan x="425.25" y="450.27">0</tspan><tspan x="429.75" y="450.27">0</tspan><tspan x="434.25" y="450.27">0</tspan></text><text><tspan x="274.25" y="534.07">1</tspan><tspan x="278.75" y="534.07">-</tspan><tspan x="283.25" y="534.07">1</tspan></text><text><tspan x="320.25" y="534.07" textLength="4.32" lengthAdjust="spacingAndGlyphs">S</tspan><tspan x="324.75" y="534.07" textLength="4.32" lengthAdjust="spacingAndGlyphs">C</tspan></text><text><tspan x="347.25" y="534.07" textLength="4.32" lengthAdjust="spacingAndGlyphs">W</tspan><tspan x="351.75" y="534.07" textLength="4.32" lengthAdjust="spacingAndGlyphs">C</tspan><tspan x="360.75" y="536.27">*</tspan><tspan x="369.75" y="534.07" textLength="4.32" lengthAdjust="spacingAndGlyphs">H</tspan><tspan x="378.75" y="534.07" textLength="4.32" lengthAdjust="spacingAndGlyphs">=</tspan></text><text><tspan x="402.25" y="534.07">8</tspan><tspan x="406.75" y="534.07">.</tspan><tspan x="411.25" y="534.07">0</tspan><tspan x="415.75" y="534.07">0</tspan><tspan x="420.25" y="534.07">0</tspan></text><text><tspan x="429.85" y="536.27">*</tspan></text><text><tspan x="452.05" y="534.07">0</tspan><tspan x="456.55" y="534.07">.</tspan><tspan x="461.05" y="534.07">3</tspan><tspan x="465.55" y="534.07">5</tspan><tspan x="470.05" y="534.07">0</tspan></text><text><tspan x="480.25" y="534.07" textLength="4.32" lengthAdjust="spacingAndGlyphs">=</tspan></text><text><tspan x="502.55" y="534.07">2</tspan><tspan x="507.05" y="534.07">.</tspan><tspan x="511.55" y="534.07">8</tspan><tspan x="516.05" y="534.07">0</tspan><tspan x="520.55" y="534.07">0</tspan></text><text><tspan x="273.85" y="587.97" textLength="4.32" lengthAdjust="spacingAndGlyphs">S</tspan><tspan x="278.35" y="587.97">s</tspan><tspan x="282.85" y="587.97" textLength="4.32" lengthAdjust="spacingAndGlyphs">L</tspan></text><text><tspan x="346.85" y="587.97" textLength="4.32" lengthAdjust="spacingAndGlyphs">L</tspan></text><text><tspan x="397.45" y="590.17">*</tspan></text><text><tspan x="410.85" y="587.97" textLength="4.32" lengthAdjust="spacingAndGlyphs">H</tspan></text><text><tspan x="437.95" y="587.97" textLength="4.32" lengthAdjust="spacingAndGlyphs">=</tspan></text><text><tspan x="516.75" y="587.97">1</tspan><tspan x="521.25" y="587.97">0</tspan><tspan x="525.75" y="587.97">.</tspan><tspan x="530.25" y="587.97">0</tspan><tspan x="534.75" y="587.97">0</tspan><tspan x="539.25" y="587.97">0</tspan></text><text><tspan x="569.05" y="590.17">*</tspan></text><text><tspan x="593.55" y="587.97">0</tspan><tspan x="598.05" y="587.97">.</tspan><tspan x="602.55" y="587.97">3</tspan><tspan x="607.05" y="587.97">5</tspan><tspan x="611.55" y="587.97">0</tspan></text><text><tspan x="621.55" y="587.97" textLength="4.32" lengthAdjust="spacingAndGlyphs">=</tspan></text><text><tspan x="643.35" y="587.97">3</tspan><tspan x="647.85" y="587.97">.</tspan><tspan x="652.35" y="587.97">5</tspan><tspan x="656.85" y="587.97">0</tspan><tspan x="661.35" y="587.97">0</tspan></text><text><tspan x="273.85" y="605.87" textLength="4.32" lengthAdjust="spacingAndGlyphs">S</tspan><tspan x="278.35" y="605.87">s</tspan><tspan x="282.85" y="605.87" textLength="4.32" lengthAdjust="spacingAndGlyphs">R</tspan></text><text><tspan x="346.85" y="605.87" textLength="4.32" lengthAdjust="spacingAndGlyphs">L</tspan></text><text><tspan x="397.45" y="608.07">*</tspan></text><text><tspan x="410.85" y="605.87" textLength="4.32" lengthAdjust="spacingAndGlyphs">H</tspan></text><text><tspan x="437.95" y="605.87" textLength="4.32" lengthAdjust="spacingAndGlyphs">=</tspan></text><text><tspan x="516.75" y="605.87">1</tspan><tspan x="521.25" y="605.87">0</tspan><tspan x="525.75" y="605.87">.</tspan><tspan x="530.25" y="605.87">0</tspan><tspan x="534.75" y="605.87">0</tspan><tspan x="539.25" y="605.87">0</tspan></text><text><tspan x="569.05" y="608.07">*</tspan></text><text><tspan x="593.55" y="605.87">0</tspan><tspan x="598.05" y="605.87">.</tspan><tspan x="602.55" y="605.87">3</tspan><tspan x="607.05" y="605.87">5</tspan><tspan x="611.55" y="605.87">0</tspan></text><text><tspan x="621.55" y="605.87" textLength="4.32" lengthAdjust="spacingAndGlyphs">=</tspan></text><text><tspan x="643.35" y="605.87">3</tspan><tspan x="647.85" y="605.87">.</tspan><tspan x="652.35" y="605.87">5</tspan><tspan x="656.85" y="605.87">0</tspan><tspan x="661.35" y="605.87">0</tspan></text><text><tspan x="273.85" y="623.27" textLength="4.32" lengthAdjust="spacingAndGlyphs">S</tspan><tspan x="278.35" y="623.27" textLength="4.32" lengthAdjust="spacingAndGlyphs">T</tspan></text><text><tspan x="346.85" y="623.27" textLength="4.32" lengthAdjust="spacingAndGlyphs">L</tspan></text><text><tspan x="397.45" y="625.47">*</tspan></text><text><tspan x="410.85" y="623.27" textLength="4.32" lengthAdjust="spacingAndGlyphs">W</tspan><tspan x="415.35" y="623.27" textLength="4.32" lengthAdjust="spacingAndGlyphs">C</tspan></text><text><tspan x="437.95" y="623.27" textLength="4.32" lengthAdjust="spacingAndGlyphs">=</tspan></text><text><tspan x="516.75" y="623.27">1</tspan><tspan x="521.25" y="623.27">0</tspan><tspan x="525.75" y="623.27">.</tspan><tspan x="530.25" y="623.27">0</tspan><tspan x="534.75" y="623.27">0</tspan><tspan x="539.25" y="623.27">0</tspan></text><text><tspan x="569.05" y="625.47">*</tspan></text><text><tspan x="593.55" y="623.27">8</tspan><tspan x="598.05" y="623.27">.</tspan><tspan x="602.55" y="623.27">0</tspan><tspan x="607.05" y="623.27">0</tspan><tspan x="611.55" y="623.27">0</tspan></text><text><tspan x="621.55" y="623.27" textLength="4.32" lengthAdjust="spacingAndGlyphs">=</tspan></text><text><tspan x="638.85" y="623.27">8</tspan><tspan x="643.35" y="623.27">0</tspan><tspan x="647.85" y="623.27">.</tspan><tspan x="652.35" y="623.27">0</tspan><tspan x="656.85" y="623.27">0</tspan><tspan x="661.35" y="623.27">0</tspan></text></svg></body></html>
